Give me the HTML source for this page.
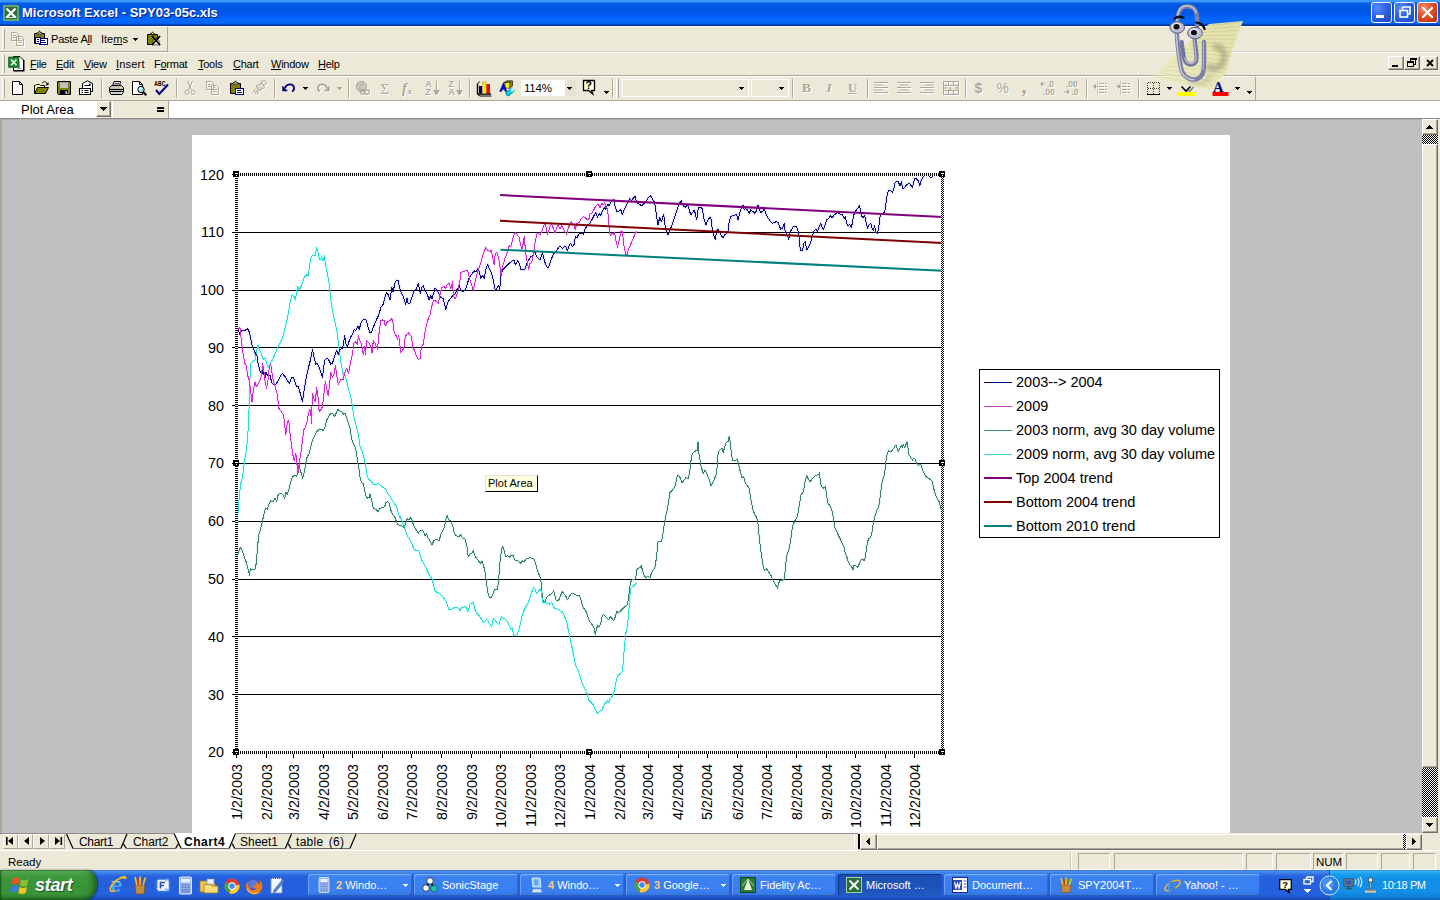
<!DOCTYPE html>
<html><head><meta charset="utf-8"><title>Microsoft Excel - SPY03-05c.xls</title>
<style>
html,body{margin:0;padding:0;background:#ece9d8;}
body{width:1440px;height:900px;overflow:hidden;font-family:"Liberation Sans",sans-serif;font-size:11px;color:#000;}
#root{position:relative;width:1440px;height:900px;overflow:hidden;background:#ece9d8;}
.abs{position:absolute;}
.t{position:absolute;white-space:nowrap;line-height:1;}
u{text-decoration:underline;}
#title{left:0;top:0;width:1440px;height:26px;background:linear-gradient(to bottom,#3d9bff 0px,#3a96fd 1.5px,#1c74ee 2.5px,#0a5ee3 3.5px,#0057e2 5px,#0056e5 12px,#005af0 14.5px,#0060f8 16.5px,#0468fc 19px,#0568fb 23px,#0556dc 24px,#0038a8 25px,#00309a 26px);}
#title .cap{left:22px;top:6px;font-weight:bold;font-size:13px;color:#fff;text-shadow:1px 1px 0 #0a1883;}
.tb{position:absolute;width:21px;height:21px;top:2px;border-radius:3px;box-sizing:border-box;border:1px solid #fff;background:radial-gradient(circle at 30% 25%,#5a8bf5 0%,#2f62e3 45%,#1a47c8 100%);}
.tb.x{background:radial-gradient(circle at 30% 25%,#f0926f 0%,#dd4f28 45%,#b8300f 100%);}
.sep{position:absolute;width:2px;border-left:1px solid #aca899;border-right:1px solid #fff;box-sizing:border-box;}
.grip{position:absolute;width:3px;border-left:1px solid #fff;border-right:1px solid #aca899;box-sizing:border-box;}
.hl{position:absolute;height:2px;border-top:1px solid #aca899;border-bottom:1px solid #fff;box-sizing:border-box;}
.btn3d{position:absolute;box-sizing:border-box;background:#ece9d8;border:1px solid;border-color:#fff #716f64 #716f64 #fff;box-shadow:inset -1px -1px 0 #aca899;}
.sunk{position:absolute;box-sizing:border-box;border:1px solid;border-color:#aca899 #fff #fff #aca899;}
.dither{position:absolute;background-color:#fff;background-image:linear-gradient(45deg,#000 25%,transparent 25%,transparent 75%,#000 75%),linear-gradient(45deg,#000 25%,transparent 25%,transparent 75%,#000 75%);background-size:2px 2px;background-position:0 0,1px 1px;}
.task{position:absolute;top:874px;height:22px;width:104px;border-radius:3px;box-sizing:border-box;background:linear-gradient(to bottom,#5a94f5 0%,#3c81f0 12%,#3a7ff0 80%,#3372e0 100%);box-shadow:inset 1px 1px 0 rgba(255,255,255,.25), inset -1px -1px 0 rgba(0,0,0,.18);color:#fff;font-size:11px;}
.task.act{background:linear-gradient(to bottom,#1b50b8 0%,#1e52b7 50%,#2159c4 100%);box-shadow:inset 1px 1px 1px rgba(0,0,0,.35);}
.task .lbl{position:absolute;left:28px;top:5px;white-space:nowrap;font-size:11px;}

</style></head>
<body>
<div id="root">
<div id="title" class="abs">
<svg class="abs" style="left:3px;top:5px" width="16" height="16" viewBox="0 0 16 16" ><rect x="0" y="0" width="16" height="16" fill="#3a7d44"/><rect x="1" y="1" width="14" height="14" fill="#2e6b3a" stroke="#9fd0a0" stroke-width="1"/>
<path d="M3.5,3.5 L12.5,12.5 M12.5,3.5 L3.5,12.5" stroke="#fff" stroke-width="2.2"/>
<path d="M2.5,12.5 H13.5" stroke="#cfe8cf" stroke-width="1"/></svg>
<div class="t cap">Microsoft Excel - SPY03-05c.xls</div>
<div class="tb" style="left:1371px"><svg class="abs" style="left:4px;top:12px" width="8" height="3" viewBox="0 0 8 3" ><rect width="8" height="3" fill="#fff"/></svg></div>
<div class="tb" style="left:1394px"><svg class="abs" style="left:4px;top:3px" width="12" height="12" viewBox="0 0 12 12" ><path d="M3.5,1 H11 V8 H9 M3.5,1 V3.5" stroke="#fff" stroke-width="1.6" fill="none"/><rect x="1" y="4.5" width="7.5" height="6.5" fill="none" stroke="#fff" stroke-width="1.6"/></svg></div>
<div class="tb x" style="left:1417px"><svg class="abs" style="left:4px;top:4px" width="11" height="11" viewBox="0 0 11 11" ><path d="M1,1 L10,10 M10,1 L1,10" stroke="#fff" stroke-width="2.2" stroke-linecap="round"/></svg></div>
</div>
<div class="abs" style="left:0;top:51px;width:1440px;height:1px;background:#d2cfbf"></div>
<div class="abs" style="left:0;top:52px;width:1440px;height:1px;background:#fff"></div>
<div class="abs" style="left:0;top:51px;width:168px;height:1px;background:#aca899"></div>
<div class="abs" style="left:167px;top:27px;width:1px;height:25px;background:#aca899"></div>
<div class="abs" style="left:0;top:75px;width:1440px;height:1px;background:#aca899"></div>
<div class="abs" style="left:0;top:76px;width:1440px;height:1px;background:#fff"></div>
<div class="abs" style="left:0;top:100px;width:1440px;height:1px;background:#aca899"></div>
<div class="abs" style="left:1255px;top:77px;width:1px;height:23px;background:#aca899"></div>
<div class="abs" style="left:0;top:26px;width:1440px;height:1px;background:#fbfaf4"></div>
<div class="grip" style="left:2px;top:29px;height:20px"></div>
<div class="grip" style="left:2px;top:55px;height:18px"></div>
<div class="grip" style="left:2px;top:79px;height:19px"></div>
<div class="grip" style="left:616px;top:79px;height:19px"></div>
<svg class="abs" style="left:10px;top:31px" width="16" height="16" viewBox="0 0 16 16" ><g transform="translate(1,1)" style="--c:#fff" stroke="#fff" fill="#fff"><path d="M1.5,1.5 H6.5 L8.5,3.5 V9.5 H1.5 Z M6.5,5.5 H11.5 L13.5,7.5 V14.5 H6.5 Z" fill="none"/><path d="M3,4.5 H6 M3,6.5 H6 M8,9.5 H12 M8,11.5 H12 M8,7.5 H10" fill="none"/></g><g stroke="#aca899" fill="#aca899"><path d="M1.5,1.5 H6.5 L8.5,3.5 V9.5 H1.5 Z M6.5,5.5 H11.5 L13.5,7.5 V14.5 H6.5 Z" fill="none"/><path d="M3,4.5 H6 M3,6.5 H6 M8,9.5 H12 M8,11.5 H12 M8,7.5 H10" fill="none"/></g></svg>
<svg class="abs" style="left:33px;top:30px" width="16" height="16" viewBox="0 0 16 16" ><path d="M1.5,3.5 H11.5 V13.5 H1.5 Z" fill="#808000" stroke="#000"/>
<path d="M4.5,3.5 V2.5 H5.5 L6.5,0.8 L7.5,2.5 H8.5 V3.5 Z" fill="#ffff66" stroke="#000" stroke-width=".8"/>
<rect x="4" y="3" width="5" height="1.6" fill="#c0c0c0" stroke="#000" stroke-width=".5"/>
<rect x="6.5" y="8.5" width="8" height="6" fill="#fff" stroke="#000080"/>
<path d="M8,10.5 H12 M8,12.5 H13" stroke="#000080"/><rect x="2.5" y="7.5" width="5" height="6" fill="#fff" stroke="#000080"/><path d="M4,9.5 H6 M4,11.5 H6" stroke="#000080"/></svg>
<div class="t" style="left:51px;top:34px;font-size:11px;letter-spacing:-0.2px">Paste A<u>l</u>l</div>
<div class="t" style="left:101px;top:34px;font-size:11px">Ite<u>m</u>s</div>
<svg class="abs" style="left:133px;top:38px" width="5" height="3" viewBox="0 0 5 3" shape-rendering="crispEdges"><path d="M0,0 H5 L2.5,3 Z" fill="#000"/></svg>
<svg class="abs" style="left:146px;top:31px" width="16" height="16" viewBox="0 0 16 16" ><path d="M1.5,3.5 H11.5 V13.5 H1.5 Z" fill="#808000" stroke="#000"/>
<path d="M4.5,3.5 V2.5 H5.5 L6.5,0.8 L7.5,2.5 H8.5 V3.5 Z" fill="#ffff66" stroke="#000" stroke-width=".8"/>
<path d="M6,5 L14,14 M14,5 L6,14" stroke="#000" stroke-width="1.6"/><path d="M7,9 h6 v5 h-6z" fill="#fff" stroke="#000" stroke-width=".6" opacity=".85"/><path d="M6,5 L14,14 M14,5 L6,14" stroke="#000" stroke-width="1.3"/></svg>
<svg class="abs" style="left:8px;top:54px" width="17" height="18" viewBox="0 0 17 18" ><path d="M5.5,2.5 H12 L15.5,6 V16.5 H5.5 Z" fill="#fff" stroke="#000" stroke-width="1"/><path d="M5.5,16.8 H15.8 V6" stroke="#000" stroke-width="1.4" fill="none"/>
<rect x="0.8" y="3.2" width="10" height="10" fill="#1f8a32" stroke="#0b5a1a"/><path d="M3,5.5 L8.5,11.2 M8.5,5.5 L3,11.2" stroke="#e8ffe8" stroke-width="1.5"/>
<path d="M11.5,8 V14 M9,14.5 H14" stroke="#6a8ad0" stroke-width="1" opacity=".7"/></svg>
<div class="t" style="left:30px;top:59px;font-size:11px;letter-spacing:-0.25px"><u>F</u>ile</div>
<div class="t" style="left:56px;top:59px;font-size:11px;letter-spacing:-0.25px"><u>E</u>dit</div>
<div class="t" style="left:84px;top:59px;font-size:11px;letter-spacing:-0.25px"><u>V</u>iew</div>
<div class="t" style="left:116px;top:59px;font-size:11px;letter-spacing:-0.25px"><span style="letter-spacing:0.2px"><u>I</u>nsert</span></div>
<div class="t" style="left:154px;top:59px;font-size:11px;letter-spacing:-0.25px">F<u>o</u>rmat</div>
<div class="t" style="left:198px;top:59px;font-size:11px;letter-spacing:-0.25px"><u>T</u>ools</div>
<div class="t" style="left:233px;top:59px;font-size:11px;letter-spacing:-0.25px"><u>C</u>hart</div>
<div class="t" style="left:271px;top:59px;font-size:11px;letter-spacing:-0.25px"><u>W</u>indow</div>
<div class="t" style="left:318px;top:59px;font-size:11px;letter-spacing:-0.25px"><u>H</u>elp</div>
<div class="btn3d" style="left:1388px;top:56px;width:16px;height:14px"><svg class="abs" style="left:3px;top:8px" width="6" height="2" viewBox="0 0 6 2" ><rect width="6" height="2" fill="#000"/></svg></div>
<div class="btn3d" style="left:1404px;top:56px;width:16px;height:14px"><svg class="abs" style="left:2px;top:1px" width="10" height="10" viewBox="0 0 10 10" ><path d="M3,0.5 H9 V1.5 H3 Z M3,0.5 V3 M8.5,1 V6 H7" stroke="#000" stroke-width="1" fill="none" shape-rendering="crispEdges"/><path d="M0.5,3.5 H6.5 V4.5 H0.5 Z M0.5,4 V8.5 H6.5 V4" fill="none" stroke="#000" stroke-width="1" shape-rendering="crispEdges"/></svg></div>
<div class="btn3d" style="left:1422px;top:56px;width:16px;height:14px"><svg class="abs" style="left:3px;top:2px" width="8" height="8" viewBox="0 0 8 8" ><path d="M1,1 L7,7 M7,1 L1,7" stroke="#000" stroke-width="1.8"/></svg></div>
<svg class="abs" style="left:10px;top:80px" width="17" height="17" viewBox="0 0 17 17" ><path d="M2.5,1.5 H9.5 L12.5,4.5 V14.5 H2.5 Z" fill="#fff" stroke="#000"/><path d="M9.5,1.5 V4.5 H12.5" fill="none" stroke="#000"/></svg>
<svg class="abs" style="left:33px;top:80px" width="17" height="17" viewBox="0 0 17 17" ><path d="M1.5,13.5 V5.5 H2.5 L3.5,4.5 H6.5 L7.5,5.5 H11.5 V7.5" fill="#ffff99" stroke="#000"/>
<path d="M1.5,13.5 L4.5,7.5 H15.5 L12.5,13.5 Z" fill="#808000" stroke="#000"/>
<path d="M9,3.5 C10.5,1.2 13,1.2 14.2,3.6" fill="none" stroke="#000"/><path d="M15.5,2 V5.3 H12.3 Z" fill="#000"/></svg>
<svg class="abs" style="left:56px;top:80px" width="17" height="17" viewBox="0 0 17 17" ><path d="M1.5,1.5 H14.5 V14.5 H2.5 L1.5,13.5 Z" fill="#808000" stroke="#000"/>
<rect x="4" y="2" width="8" height="6" fill="#c0c0c0"/><rect x="4" y="2" width="8" height="1.6" fill="#a9a9a9"/>
<rect x="4" y="10" width="8" height="4.5" fill="#000"/><rect x="9.5" y="11" width="1.8" height="3" fill="#c0c0c0"/></svg>
<svg class="abs" style="left:79px;top:80px" width="17" height="17" viewBox="0 0 17 17" ><path d="M3.5,8 V3.5 L8.5,0.8 L13.5,3.5 V11.5 H10" fill="#fff" stroke="#000"/>
<path d="M5.5,5.5 H11.5" stroke="#000"/><rect x="10" y="3.6" width="1.6" height="1.6" fill="#000080"/>
<rect x="0.5" y="8.5" width="11" height="6" fill="#fff" stroke="#000"/><path d="M2.5,10.5 H4 M5.5,10.5 H9.5 M2.5,12.5 H4 M5.5,12.5 H9.5" stroke="#000"/></svg>
<svg class="abs" style="left:108px;top:80px" width="17" height="17" viewBox="0 0 17 17" ><path d="M4.5,6 L6,1.5 H12.5 L11.5,6" fill="#fff" stroke="#000"/><path d="M6.5,3.5 H11 M6,5 H10.5" stroke="#000" stroke-width=".7"/>
<path d="M1.5,7.5 L3.5,5.5 H13.5 L15.5,7.5 V11.5 H1.5 Z" fill="#c0c0c0" stroke="#000"/>
<path d="M1.5,11.5 H15.5 L14,14.5 H3 Z" fill="#fff" stroke="#000"/><path d="M2,9.5 H15" stroke="#000"/><rect x="12" y="7.2" width="1.6" height="1.2" fill="#ffff00"/>
<path d="M3.5,13 H13" stroke="#808080" stroke-width=".8"/></svg>
<svg class="abs" style="left:131px;top:80px" width="17" height="17" viewBox="0 0 17 17" ><path d="M1.5,1.5 H8.5 L11.5,4.5 V14.5 H1.5 Z" fill="#fff" stroke="#000"/><path d="M8.5,1.5 V4.5 H11.5" fill="none" stroke="#000"/>
<circle cx="10" cy="9.5" r="3.2" fill="#9fe0e8" stroke="#000" stroke-width="1"/><circle cx="9.2" cy="8.7" r="1.2" fill="#e8ffff"/>
<path d="M12.3,12 L15.3,15.2" stroke="#000" stroke-width="2"/></svg>
<svg class="abs" style="left:154px;top:80px" width="17" height="17" viewBox="0 0 17 17" ><text x="0.3" y="6.2" font-family="Liberation Sans" font-weight="bold" font-size="6.6" fill="#000" textLength="11" lengthAdjust="spacingAndGlyphs">ABC</text>
<path d="M2,10 L5.3,14 L14,4.5" fill="none" stroke="#000080" stroke-width="2"/></svg>
<svg class="abs" style="left:183px;top:80px" width="17" height="17" viewBox="0 0 17 17" ><g transform="translate(1,1)" style="--c:#fff" stroke="#fff" fill="#fff"><path d="M4.5,1 L8.5,10 M9.5,1 L5.5,10" fill="none"/><circle cx="4" cy="12.3" r="2" fill="none"/><circle cx="10" cy="12.3" r="2" fill="none"/></g><g stroke="#aca899" fill="#aca899"><path d="M4.5,1 L8.5,10 M9.5,1 L5.5,10" fill="none"/><circle cx="4" cy="12.3" r="2" fill="none"/><circle cx="10" cy="12.3" r="2" fill="none"/></g></svg>
<svg class="abs" style="left:205px;top:80px" width="17" height="17" viewBox="0 0 17 17" ><g transform="translate(1,1)" style="--c:#fff" stroke="#fff" fill="#fff"><path d="M1.5,1.5 H6.5 L8.5,3.5 V9.5 H1.5 Z M6.5,5.5 H11.5 L13.5,7.5 V14.5 H6.5 Z" fill="none"/><path d="M3,4.5 H6 M3,6.5 H6 M8,9.5 H12 M8,11.5 H12 M8,7.5 H10" fill="none"/></g><g stroke="#aca899" fill="#aca899"><path d="M1.5,1.5 H6.5 L8.5,3.5 V9.5 H1.5 Z M6.5,5.5 H11.5 L13.5,7.5 V14.5 H6.5 Z" fill="none"/><path d="M3,4.5 H6 M3,6.5 H6 M8,9.5 H12 M8,11.5 H12 M8,7.5 H10" fill="none"/></g></svg>
<svg class="abs" style="left:229px;top:80px" width="17" height="17" viewBox="0 0 17 17" ><path d="M1.5,3.5 H11.5 V13.5 H1.5 Z" fill="#808000" stroke="#000"/>
<path d="M4.5,3.5 V2.5 H5.5 L6.5,0.8 L7.5,2.5 H8.5 V3.5 Z" fill="#ffff66" stroke="#000" stroke-width=".8"/>
<rect x="4" y="3" width="5" height="1.6" fill="#c0c0c0" stroke="#000" stroke-width=".5"/>
<rect x="6.5" y="8.5" width="8" height="6" fill="#fff" stroke="#000080"/>
<path d="M8,10.5 H12 M8,12.5 H13" stroke="#000080"/></svg>
<svg class="abs" style="left:252px;top:80px" width="17" height="17" viewBox="0 0 17 17" ><g transform="translate(1,1)" style="--c:#fff" stroke="#fff" fill="#fff"><path d="M9,1.5 L12.5,0.5 L14.5,3.5 L11.5,5.5 Z" fill="none"/><path d="M4,6 L10,3.2 L12.6,7.4 L7,11 Z" fill="none"/><path d="M3,9 L1.5,13 M4.5,10 L3.5,14 M6,11 L5.5,15" fill="none"/><path d="M5.5,6.5 L8,10 M7.5,5.5 L10,9" fill="none"/></g><g stroke="#aca899" fill="#aca899"><path d="M9,1.5 L12.5,0.5 L14.5,3.5 L11.5,5.5 Z" fill="none"/><path d="M4,6 L10,3.2 L12.6,7.4 L7,11 Z" fill="none"/><path d="M3,9 L1.5,13 M4.5,10 L3.5,14 M6,11 L5.5,15" fill="none"/><path d="M5.5,6.5 L8,10 M7.5,5.5 L10,9" fill="none"/></g></svg>
<svg class="abs" style="left:281px;top:80px" width="17" height="17" viewBox="0 0 17 17" ><g fill="#000080" stroke="#000080" stroke-width=".5"><path d="M1.5,11 L1.5,6 L6.5,11 Z"/><path d="M4,8 C5.5,3.6 12,3 13,7.4 C13.4,9.2 12.6,10.6 11.2,11.6" fill="none" stroke-width="1.8"/></g></svg>
<svg class="abs" style="left:315px;top:80px" width="17" height="17" viewBox="0 0 17 17" ><g transform="translate(1,1)" style="--c:#fff" stroke="#fff" fill="#fff"><path d="M14.5,11 L14.5,6 L9.5,11 Z" stroke-width=".5"/><path d="M12,8 C10.5,3.6 4,3 3,7.4 C2.6,9.2 3.4,10.6 4.8,11.6" fill="none" stroke-width="1.8"/></g><g stroke="#aca899" fill="#aca899"><path d="M14.5,11 L14.5,6 L9.5,11 Z" stroke-width=".5"/><path d="M12,8 C10.5,3.6 4,3 3,7.4 C2.6,9.2 3.4,10.6 4.8,11.6" fill="none" stroke-width="1.8"/></g></svg>
<svg class="abs" style="left:355px;top:80px" width="17" height="17" viewBox="0 0 17 17" ><g transform="translate(1,1)" stroke="#fff" fill="#fff"><circle cx="6.5" cy="6.5" r="5.2" stroke-width="1" fill="none"/><path d="M2,5 C4,3 5,7 7,5.5 C8,4.5 7,2.5 8.5,2 M3,10 C4,8 6,9.5 6,11" fill="none"/><rect x="5.5" y="10" width="4.6" height="4" rx="1.5" fill="none" stroke-width="1.3"/><rect x="9.6" y="10" width="4.8" height="4" rx="1.5" fill="none" stroke-width="1.3"/></g><g stroke="#aca899" fill="#aca899"><circle cx="6.5" cy="6.5" r="5.2" fill="#aca899" opacity=".55" stroke="none"/><circle cx="6.5" cy="6.5" r="5.2" stroke-width="1" fill="none"/><path d="M2,5 C4,3 5,7 7,5.5 C8,4.5 7,2.5 8.5,2 M3,10 C4,8 6,9.5 6,11" fill="none"/><rect x="5.5" y="10" width="4.6" height="4" rx="1.5" fill="none" stroke-width="1.3"/><rect x="9.6" y="10" width="4.8" height="4" rx="1.5" fill="none" stroke-width="1.3"/></g></svg>
<svg class="abs" style="left:425px;top:80px" width="17" height="17" viewBox="0 0 17 17" ><text x="1.5" y="8" font-family="Liberation Sans" font-size="8.5" font-weight="bold" font-style="normal" fill="#fff" >A</text><text x="0.5" y="7" font-family="Liberation Sans" font-size="8.5" font-weight="bold" font-style="normal" fill="#aca899" >A</text><text x="1.5" y="16" font-family="Liberation Sans" font-size="8.5" font-weight="bold" font-style="normal" fill="#fff" >Z</text><text x="0.5" y="15" font-family="Liberation Sans" font-size="8.5" font-weight="bold" font-style="normal" fill="#aca899" >Z</text><g transform="translate(1,1)" style="--c:#fff" stroke="#fff" fill="#fff"><path d="M11.5,1 V12" fill="none"/><path d="M8.8,10.5 H14.2 L11.5,15 Z"/></g><g stroke="#aca899" fill="#aca899"><path d="M11.5,1 V12" fill="none"/><path d="M8.8,10.5 H14.2 L11.5,15 Z"/></g></svg>
<svg class="abs" style="left:448px;top:80px" width="17" height="17" viewBox="0 0 17 17" ><text x="1.5" y="8" font-family="Liberation Sans" font-size="8.5" font-weight="bold" font-style="normal" fill="#fff" >Z</text><text x="0.5" y="7" font-family="Liberation Sans" font-size="8.5" font-weight="bold" font-style="normal" fill="#aca899" >Z</text><text x="1.5" y="16" font-family="Liberation Sans" font-size="8.5" font-weight="bold" font-style="normal" fill="#fff" >A</text><text x="0.5" y="15" font-family="Liberation Sans" font-size="8.5" font-weight="bold" font-style="normal" fill="#aca899" >A</text><g transform="translate(1,1)" style="--c:#fff" stroke="#fff" fill="#fff"><path d="M11.5,1 V12" fill="none"/><path d="M8.8,10.5 H14.2 L11.5,15 Z"/></g><g stroke="#aca899" fill="#aca899"><path d="M11.5,1 V12" fill="none"/><path d="M8.8,10.5 H14.2 L11.5,15 Z"/></g></svg>
<svg class="abs" style="left:476px;top:80px" width="17" height="17" viewBox="0 0 17 17" ><path d="M1.5,4 V14 H15" fill="none" stroke="#000" stroke-width="1.4"/><path d="M1.5,4 L3.5,1.5" stroke="#000"/>
<rect x="3" y="6" width="3.2" height="7.5" fill="#000080"/><rect x="6.6" y="2" width="3.4" height="11.5" fill="#ffee00" stroke="#a08000" stroke-width=".4"/><rect x="10.4" y="4" width="3.6" height="9.5" fill="#e01010"/>
<path d="M2,14.8 L4,16 H15.5" fill="none" stroke="#000" stroke-width="1"/></svg>
<svg class="abs" style="left:499px;top:80px" width="17" height="17" viewBox="0 0 17 17" ><path d="M5,2.5 L8,0.8 H13.5 V6 L10.5,8 Z" fill="#808000" stroke="#000" stroke-width=".6"/><rect x="6" y="2.5" width="4.8" height="5.6" fill="#ffee00" stroke="#000" stroke-width=".5"/>
<path d="M0.5,11.5 L4.5,2.5 L8,11.5 H6 L5.4,9.5 H3.3 L2.6,11.5 Z" fill="#0000c0" stroke="#000080" stroke-width=".4"/>
<path d="M7,12.5 L12,8.2 A2.4,2.4 0 0 1 15.2,11.2 L10.2,15.6 A2.4,2.4 0 0 1 7,12.5 Z" fill="#00d0e0" stroke="#006080" stroke-width=".6"/><ellipse cx="13.6" cy="9.7" rx="1.8" ry="2.2" fill="#c0f4f8" transform="rotate(40 13.6 9.7)"/></svg>
<svg class="abs" style="left:873px;top:80px" width="17" height="17" viewBox="0 0 17 17" ><g transform="translate(1,1)" style="--c:#fff" stroke="#fff" fill="#fff"><path d="M1,2.5 h14" fill="none" stroke-width="1"/><path d="M1,5.0 h9" fill="none" stroke-width="1"/><path d="M1,7.5 h14" fill="none" stroke-width="1"/><path d="M1,10.0 h9" fill="none" stroke-width="1"/><path d="M1,12.5 h14" fill="none" stroke-width="1"/></g><g stroke="#aca899" fill="#aca899"><path d="M1,2.5 h14" fill="none" stroke-width="1"/><path d="M1,5.0 h9" fill="none" stroke-width="1"/><path d="M1,7.5 h14" fill="none" stroke-width="1"/><path d="M1,10.0 h9" fill="none" stroke-width="1"/><path d="M1,12.5 h14" fill="none" stroke-width="1"/></g></svg>
<svg class="abs" style="left:896px;top:80px" width="17" height="17" viewBox="0 0 17 17" ><g transform="translate(1,1)" style="--c:#fff" stroke="#fff" fill="#fff"><path d="M1,2.5 h14" fill="none" stroke-width="1"/><path d="M3.5,5.0 h9" fill="none" stroke-width="1"/><path d="M1,7.5 h14" fill="none" stroke-width="1"/><path d="M3.5,10.0 h9" fill="none" stroke-width="1"/><path d="M1,12.5 h14" fill="none" stroke-width="1"/></g><g stroke="#aca899" fill="#aca899"><path d="M1,2.5 h14" fill="none" stroke-width="1"/><path d="M3.5,5.0 h9" fill="none" stroke-width="1"/><path d="M1,7.5 h14" fill="none" stroke-width="1"/><path d="M3.5,10.0 h9" fill="none" stroke-width="1"/><path d="M1,12.5 h14" fill="none" stroke-width="1"/></g></svg>
<svg class="abs" style="left:919px;top:80px" width="17" height="17" viewBox="0 0 17 17" ><g transform="translate(1,1)" style="--c:#fff" stroke="#fff" fill="#fff"><path d="M1,2.5 h14" fill="none" stroke-width="1"/><path d="M6,5.0 h9" fill="none" stroke-width="1"/><path d="M1,7.5 h14" fill="none" stroke-width="1"/><path d="M6,10.0 h9" fill="none" stroke-width="1"/><path d="M1,12.5 h14" fill="none" stroke-width="1"/></g><g stroke="#aca899" fill="#aca899"><path d="M1,2.5 h14" fill="none" stroke-width="1"/><path d="M6,5.0 h9" fill="none" stroke-width="1"/><path d="M1,7.5 h14" fill="none" stroke-width="1"/><path d="M6,10.0 h9" fill="none" stroke-width="1"/><path d="M1,12.5 h14" fill="none" stroke-width="1"/></g></svg>
<svg class="abs" style="left:943px;top:80px" width="17" height="17" viewBox="0 0 17 17" ><g transform="translate(1,1)" style="--c:#fff" stroke="#fff" fill="#fff"><rect x="0.5" y="1.5" width="15" height="13" fill="none"/><path d="M0.5,5.5 H15.5 M0.5,10.5 H15.5 M5.5,1.5 V5.5 M10.5,1.5 V5.5 M5.5,10.5 V14.5 M10.5,10.5 V14.5" fill="none"/><path d="M1.5,8 h3 M14.5,8 h-3 M2.8,6.8 L1.5,8 L2.8,9.2 M13.2,6.8 L14.5,8 L13.2,9.2" fill="none" stroke-width=".9"/><text x="5.6" y="10" font-family="Liberation Sans" font-size="5.5" stroke="none">a</text></g><g stroke="#aca899" fill="#aca899"><rect x="0.5" y="1.5" width="15" height="13" fill="none"/><path d="M0.5,5.5 H15.5 M0.5,10.5 H15.5 M5.5,1.5 V5.5 M10.5,1.5 V5.5 M5.5,10.5 V14.5 M10.5,10.5 V14.5" fill="none"/><path d="M1.5,8 h3 M14.5,8 h-3 M2.8,6.8 L1.5,8 L2.8,9.2 M13.2,6.8 L14.5,8 L13.2,9.2" fill="none" stroke-width=".9"/><text x="5.6" y="10" font-family="Liberation Sans" font-size="5.5" stroke="none">a</text></g></svg>
<svg class="abs" style="left:1093px;top:80px" width="17" height="17" viewBox="0 0 17 17" ><g transform="translate(1,1)" style="--c:#fff" stroke="#fff" fill="#fff"><path d="M6,3.5 H14 M6,6.5 H14 M6,9.5 H14 M6,12.5 H14" fill="none" stroke-dasharray="5 1"/><path d="M4.5,1.5 V14.5" fill="none" stroke-dasharray="1 1"/><path d="M1,6.5 H4.5" fill="none"/><path d="M2.5,4.5 L0.5,6.5 L2.5,8.5 Z"/></g><g stroke="#aca899" fill="#aca899"><path d="M6,3.5 H14 M6,6.5 H14 M6,9.5 H14 M6,12.5 H14" fill="none" stroke-dasharray="5 1"/><path d="M4.5,1.5 V14.5" fill="none" stroke-dasharray="1 1"/><path d="M1,6.5 H4.5" fill="none"/><path d="M2.5,4.5 L0.5,6.5 L2.5,8.5 Z"/></g></svg>
<svg class="abs" style="left:1116px;top:80px" width="17" height="17" viewBox="0 0 17 17" ><g transform="translate(1,1)" style="--c:#fff" stroke="#fff" fill="#fff"><path d="M6,3.5 H14 M6,6.5 H14 M6,9.5 H14 M6,12.5 H14" fill="none" stroke-dasharray="5 1"/><path d="M4.5,1.5 V14.5" fill="none" stroke-dasharray="1 1"/><path d="M0.5,6.5 H4" fill="none"/><path d="M2.5,4.5 L4.5,6.5 L2.5,8.5 Z"/></g><g stroke="#aca899" fill="#aca899"><path d="M6,3.5 H14 M6,6.5 H14 M6,9.5 H14 M6,12.5 H14" fill="none" stroke-dasharray="5 1"/><path d="M4.5,1.5 V14.5" fill="none" stroke-dasharray="1 1"/><path d="M0.5,6.5 H4" fill="none"/><path d="M2.5,4.5 L4.5,6.5 L2.5,8.5 Z"/></g></svg>
<svg class="abs" style="left:582px;top:79px" width="17" height="17" viewBox="0 0 17 17" ><path d="M1.5,1.5 H12.5 V11.5 H9.5 L10.8,15 L6.5,11.5 H1.5 Z" fill="#ffffe1" stroke="#000" stroke-width="1.3"/>
<text x="3.6" y="10.2" font-family="Liberation Sans" font-weight="bold" font-size="10.5" fill="#000">?</text></svg>
<svg class="abs" style="left:380px;top:80px" width="17" height="17" viewBox="0 0 17 17" ><text x="1.5" y="14.5" font-family="Liberation Serif" font-size="15" font-weight="normal" font-style="normal" fill="#fff" >Σ</text><text x="0.5" y="13.5" font-family="Liberation Serif" font-size="15" font-weight="normal" font-style="normal" fill="#aca899" >Σ</text></svg>
<svg class="abs" style="left:401px;top:80px" width="17" height="17" viewBox="0 0 17 17" ><text x="2" y="14" font-family="Liberation Serif" font-size="15" font-weight="bold" font-style="italic" fill="#fff" >f</text><text x="1" y="13" font-family="Liberation Serif" font-size="15" font-weight="bold" font-style="italic" fill="#aca899" >f</text><text x="7.5" y="15" font-family="Liberation Serif" font-size="9" font-weight="bold" font-style="italic" fill="#fff" >x</text><text x="6.5" y="14" font-family="Liberation Serif" font-size="9" font-weight="bold" font-style="italic" fill="#aca899" >x</text></svg>
<svg class="abs" style="left:800px;top:80px" width="17" height="17" viewBox="0 0 17 17" ><text x="3" y="13" font-family="Liberation Serif" font-size="13.5" font-weight="bold" font-style="normal" fill="#fff" >B</text><text x="2" y="12" font-family="Liberation Serif" font-size="13.5" font-weight="bold" font-style="normal" fill="#aca899" >B</text></svg>
<svg class="abs" style="left:823px;top:80px" width="17" height="17" viewBox="0 0 17 17" ><text x="4.5" y="13" font-family="Liberation Serif" font-size="13.5" font-weight="bold" font-style="italic" fill="#fff" >I</text><text x="3.5" y="12" font-family="Liberation Serif" font-size="13.5" font-weight="bold" font-style="italic" fill="#aca899" >I</text></svg>
<svg class="abs" style="left:846px;top:80px" width="17" height="17" viewBox="0 0 17 17" ><text x="3" y="12.5" font-family="Liberation Serif" font-size="13" font-weight="bold" font-style="normal" fill="#fff" >U</text><text x="2" y="11.5" font-family="Liberation Serif" font-size="13" font-weight="bold" font-style="normal" fill="#aca899" >U</text><g transform="translate(1,1)" style="--c:#fff" stroke="#fff" fill="#fff"><path d="M2,13.5 H11" fill="none"/></g><g stroke="#aca899" fill="#aca899"><path d="M2,13.5 H11" fill="none"/></g></svg>
<svg class="abs" style="left:973px;top:80px" width="17" height="17" viewBox="0 0 17 17" ><text x="2.5" y="14" font-family="Liberation Sans" font-size="14" font-weight="bold" font-style="normal" fill="#fff" >$</text><text x="1.5" y="13" font-family="Liberation Sans" font-size="14" font-weight="bold" font-style="normal" fill="#aca899" >$</text></svg>
<svg class="abs" style="left:996px;top:80px" width="17" height="17" viewBox="0 0 17 17" ><text x="1.5" y="14" font-family="Liberation Sans" font-size="14" font-weight="normal" font-style="normal" fill="#fff" >%</text><text x="0.5" y="13" font-family="Liberation Sans" font-size="14" font-weight="normal" font-style="normal" fill="#aca899" >%</text></svg>
<svg class="abs" style="left:1020px;top:80px" width="17" height="17" viewBox="0 0 17 17" ><text x="2.5" y="13.5" font-family="Liberation Serif" font-size="20" font-weight="bold" font-style="normal" fill="#fff" >,</text><text x="1.5" y="12.5" font-family="Liberation Serif" font-size="20" font-weight="bold" font-style="normal" fill="#aca899" >,</text></svg>
<svg class="abs" style="left:1040px;top:80px" width="18" height="17" viewBox="0 0 18 17" ><text x="8" y="8" font-family="Liberation Sans" font-size="8.5" font-weight="bold" font-style="normal" fill="#fff" >.0</text><text x="7" y="7" font-family="Liberation Sans" font-size="8.5" font-weight="bold" font-style="normal" fill="#aca899" >.0</text><text x="4" y="16" font-family="Liberation Sans" font-size="8.5" font-weight="bold" font-style="normal" fill="#fff" >.00</text><text x="3" y="15" font-family="Liberation Sans" font-size="8.5" font-weight="bold" font-style="normal" fill="#aca899" >.00</text><g transform="translate(1,1)" style="--c:#fff" stroke="#fff" fill="#fff"><path d="M1,4 H6 M3,2 L1,4 L3,6" fill="none" stroke-width="1.2"/></g><g stroke="#aca899" fill="#aca899"><path d="M1,4 H6 M3,2 L1,4 L3,6" fill="none" stroke-width="1.2"/></g></svg>
<svg class="abs" style="left:1063px;top:80px" width="18" height="17" viewBox="0 0 18 17" ><text x="4" y="8" font-family="Liberation Sans" font-size="8.5" font-weight="bold" font-style="normal" fill="#fff" >.00</text><text x="3" y="7" font-family="Liberation Sans" font-size="8.5" font-weight="bold" font-style="normal" fill="#aca899" >.00</text><text x="9.5" y="16" font-family="Liberation Sans" font-size="8.5" font-weight="bold" font-style="normal" fill="#fff" >.0</text><text x="8.5" y="15" font-family="Liberation Sans" font-size="8.5" font-weight="bold" font-style="normal" fill="#aca899" >.0</text><g transform="translate(1,1)" style="--c:#fff" stroke="#fff" fill="#fff"><path d="M1,12 H6 M4,10 L6,12 L4,14" fill="none" stroke-width="1.2"/></g><g stroke="#aca899" fill="#aca899"><path d="M1,12 H6 M4,10 L6,12 L4,14" fill="none" stroke-width="1.2"/></g></svg>
<svg class="abs" style="left:303px;top:87px" width="5" height="3" viewBox="0 0 5 3" shape-rendering="crispEdges"><path d="M0,0 H5 L2.5,3 Z" fill="#000"/></svg>
<svg class="abs" style="left:337px;top:87px" width="5" height="3" viewBox="0 0 5 3" shape-rendering="crispEdges"><path d="M0,0 H5 L2.5,3 Z" fill="#aca899"/></svg>
<div class="sep" style="left:101px;top:79px;height:19px"></div>
<div class="sep" style="left:176px;top:79px;height:19px"></div>
<div class="sep" style="left:274px;top:79px;height:19px"></div>
<div class="sep" style="left:348px;top:79px;height:19px"></div>
<div class="sep" style="left:469px;top:79px;height:19px"></div>
<div class="sep" style="left:612px;top:79px;height:19px"></div>
<div class="sep" style="left:792px;top:79px;height:19px"></div>
<div class="sep" style="left:867px;top:79px;height:19px"></div>
<div class="sep" style="left:965px;top:79px;height:19px"></div>
<div class="sep" style="left:1086px;top:79px;height:19px"></div>
<div class="sep" style="left:1138px;top:79px;height:19px"></div>
<div class="abs" style="left:521px;top:80px;width:44px;height:16px;background:#fff"></div>
<div class="t" style="left:524px;top:83px;font-size:11.5px;letter-spacing:-0.2px">114%</div>
<div class="abs" style="left:565px;top:80px;width:11px;height:16px;background:#e6e3d2"></div>
<svg class="abs" style="left:567px;top:87px" width="5" height="3" viewBox="0 0 5 3" shape-rendering="crispEdges"><path d="M0,0 H5 L2.5,3 Z" fill="#000"/></svg>
<svg class="abs" style="left:604px;top:91px" width="5" height="3" viewBox="0 0 5 3" shape-rendering="crispEdges"><path d="M0,0 H5 L2.5,3 Z" fill="#000"/></svg>
<div class="abs" style="left:622px;top:79px;width:127px;height:18px;box-sizing:border-box;border:1px solid #fff"></div>
<svg class="abs" style="left:739px;top:87px" width="5" height="3" viewBox="0 0 5 3" shape-rendering="crispEdges"><path d="M0,0 H5 L2.5,3 Z" fill="#000"/></svg>
<div class="abs" style="left:751px;top:79px;width:38px;height:18px;box-sizing:border-box;border:1px solid #fff"></div>
<svg class="abs" style="left:779px;top:87px" width="5" height="3" viewBox="0 0 5 3" shape-rendering="crispEdges"><path d="M0,0 H5 L2.5,3 Z" fill="#000"/></svg>
<svg class="abs" style="left:1147px;top:82px" width="13" height="14" viewBox="0 0 13 14" ><path d="M0.5,0.5 H12.5 M0.5,6.5 H12.5 M0.5,0.5 V12.5 M6.5,0.5 V12.5 M12.5,0.5 V12.5" fill="none" stroke="#000" stroke-dasharray="1 1" opacity=".75" shape-rendering="crispEdges"/><path d="M0,12.5 H13" stroke="#000" stroke-width="1" shape-rendering="crispEdges"/></svg>
<svg class="abs" style="left:1167px;top:87px" width="5" height="3" viewBox="0 0 5 3" shape-rendering="crispEdges"><path d="M0,0 H5 L2.5,3 Z" fill="#000"/></svg>
<svg class="abs" style="left:1177px;top:81px" width="19" height="17" viewBox="0 0 19 17" ><path d="M4.5,5.5 L9,10 L13.5,5.5" fill="none" stroke="#000" stroke-width="1.6"/><path d="M10,9.5 L13,10 L16.5,6" fill="none" stroke="#707070" stroke-width="1.3"/><rect x="0" y="11" width="19" height="4" fill="#ffff00"/></svg>
<svg class="abs" style="left:1212px;top:81px" width="18" height="17" viewBox="0 0 18 17" ><text x="1" y="10.5" font-family="Liberation Serif" font-weight="bold" font-size="14.5" fill="#000080">A</text><rect x="0.5" y="11" width="16" height="4" fill="#ff0000"/></svg>
<svg class="abs" style="left:1235px;top:87px" width="5" height="3" viewBox="0 0 5 3" shape-rendering="crispEdges"><path d="M0,0 H5 L2.5,3 Z" fill="#000"/></svg>
<svg class="abs" style="left:1247px;top:91px" width="5" height="3" viewBox="0 0 5 3" shape-rendering="crispEdges"><path d="M0,0 H5 L2.5,3 Z" fill="#000"/></svg>
<div class="abs" style="left:0;top:101px;width:1440px;height:17px;background:#ece9d8"></div>
<div class="abs" style="left:0;top:101px;width:96px;height:17px;background:#fff"></div>
<div class="t" style="left:21px;top:103px;font-size:13px">Plot Area</div>
<div class="btn3d" style="left:96px;top:101px;width:15px;height:16px"></div>
<svg class="abs" style="left:100px;top:107px" width="7" height="4" viewBox="0 0 7 4" shape-rendering="crispEdges"><path d="M0,0 H7 L3.5,4 Z" fill="#000"/></svg>
<div class="abs" style="left:112px;top:101px;width:1px;height:17px;background:#fff"></div>
<div class="abs" style="left:157px;top:107px;width:7px;height:2px;background:#000"></div><div class="abs" style="left:157px;top:110px;width:7px;height:2px;background:#000"></div>
<div class="abs" style="left:168px;top:101px;width:1272px;height:17px;background:#fff;border-left:1px solid #aca899;box-sizing:border-box"></div>
<div class="abs" style="left:0;top:118px;width:1440px;height:1px;background:#8c8c8c"></div>
<div class="abs" style="left:0;top:119px;width:1422px;height:714px;background:#c0c0c0"></div><div class="abs" style="left:0;top:119px;width:1422px;height:1px;background:#b0b0b0"></div>
<div class="abs" style="left:0;top:119px;width:2px;height:714px;background:#aca899"></div>
<div class="abs" style="left:192px;top:135px;width:1038px;height:698px;background:#fff"></div>
<div class="abs" style="left:1422px;top:119px;width:16px;height:714px;background:#ece9d8"></div>
<div class="btn3d" style="left:1422px;top:119px;width:16px;height:16px"></div><svg class="abs" style="left:1426px;top:125px" width="7" height="4" viewBox="0 0 7 4" shape-rendering="crispEdges"><path d="M0,4 H7 L3.5,0 Z" fill="#000"/></svg>
<div class="dither" style="left:1422px;top:135px;width:16px;height:9px"></div>
<div class="btn3d" style="left:1422px;top:144px;width:16px;height:624px"></div>
<div class="dither" style="left:1422px;top:768px;width:16px;height:49px"></div>
<div class="btn3d" style="left:1422px;top:817px;width:16px;height:16px"></div><svg class="abs" style="left:1426px;top:823px" width="7" height="4" viewBox="0 0 7 4" shape-rendering="crispEdges"><path d="M0,0 H7 L3.5,4 Z" fill="#000"/></svg>
<div class="abs" style="left:1438px;top:119px;width:2px;height:752px;background:#ece9d8"></div>
<svg class="abs" style="left:0;top:0" width="1440" height="900" viewBox="0 0 1440 900">
<g shape-rendering="crispEdges" stroke="#000" stroke-width="1" fill="none">
<path d="M232,232.5 H943"/>
<path d="M232,290.5 H943"/>
<path d="M232,347.5 H943"/>
<path d="M232,405.5 H943"/>
<path d="M232,463.5 H943"/>
<path d="M232,521.5 H943"/>
<path d="M232,579.5 H943"/>
<path d="M232,636.5 H943"/>
<path d="M232,694.5 H943"/>
<path d="M232,174.5 H237"/>
<path d="M232,752.5 H237"/>
<path d="M236.5,752 V758"/>
<path d="M266.5,752 V758"/>
<path d="M293.5,752 V758"/>
<path d="M323.5,752 V758"/>
<path d="M352.5,752 V758"/>
<path d="M382.5,752 V758"/>
<path d="M411.5,752 V758"/>
<path d="M441.5,752 V758"/>
<path d="M471.5,752 V758"/>
<path d="M500.5,752 V758"/>
<path d="M530.5,752 V758"/>
<path d="M560.5,752 V758"/>
<path d="M590.5,752 V758"/>
<path d="M620.5,752 V758"/>
<path d="M648.5,752 V758"/>
<path d="M678.5,752 V758"/>
<path d="M707.5,752 V758"/>
<path d="M737.5,752 V758"/>
<path d="M766.5,752 V758"/>
<path d="M796.5,752 V758"/>
<path d="M826.5,752 V758"/>
<path d="M855.5,752 V758"/>
<path d="M885.5,752 V758"/>
<path d="M914.5,752 V758"/>
</g>
<g fill="none" stroke-width="3" stroke-linejoin="round" opacity=".13">
<path stroke="#40c090" d="M237.5,555.8 L239.2,550 L240.3,547.5 L242,550 L244.2,556.7 L246.7,563.3 L248.3,570 L249.5,575.3 L250.3,568.7 L252.5,569.7 L255,569.2 L256.3,563.3 L257.5,548.3 L258.7,535 L260.8,528.3 L262.5,520.8 L264.2,513.3 L265.3,508.3 L267.5,509.2 L269.2,503.3 L270.8,500.8 L273.3,501.7 L275,498.3 L276.7,501.7 L278.3,494.2 L280.8,493.3 L283.3,495 L284.7,498.3 L285.8,492.5 L287.5,494.2 L289.2,488.3 L290.8,481.7 L292.5,476.7 L295,475 L296.7,476.7 L298.3,470 L299.2,465.8 L300.8,471.7 L302.5,478.3 L304.2,472.5 L305.8,463.3 L307,457.5 L309.2,453.3 L310.8,446.7 L312.5,440 L315,435 L316.7,431.7 L319.2,429.2 L321.7,429.2 L323,430.8 L325,426.7 L326.7,420 L328.3,417.5 L330,414.2 L332.5,413.3 L334.7,416.7 L336.7,411.7 L338,409.2 L339.2,410.8 L341.7,411.7 L343.7,414.2 L345.3,413.3 L346.7,418.3 L348.3,422.5 L350,427.5 L351.3,436.7 L352.5,442.5 L354.7,445.8 L356.3,451.7 L357.5,460.8 L359.2,470 L360.3,479.2 L362,483.3 L363.3,483.3 L364.7,490 L365.8,495.8 L367.5,498.3 L369.2,497.5 L370,494.2 L371.7,500 L373.3,508.3 L375.8,509.2 L378.3,511.7 L380,508.3 L382.5,507.5 L384.7,506.7 L385.8,502.5 L387.5,501.7 L389.2,503.3 L390.8,510 L392.5,514.2 L395,517.5 L397.5,524.7 L400,525.3 L402.5,526.3 L404.2,527.5 L405.8,522.5 L407.5,518.3 L408.7,520 L410.8,517.5 L412.5,520.8 L413.3,525 L415.8,529.2 L418.3,533.3 L420,530.8 L421.7,530 L423.7,531.7 L425,535.8 L426.3,533.3 L428.3,538.3 L430,540.8 L432,545 L433.7,540.8 L435.3,540 L437.5,539.7 L439.2,540.8 L440.8,534.2 L442.5,530.8 L444.2,527.5 L445.8,520 L447.2,515 L448.7,520 L450.8,520.8 L452.5,525 L454.2,532.5 L455.8,535.3 L458.3,537 L460.8,534.7 L462.5,537.5 L465,539.2 L466.7,545 L468.3,556.7 L470,554.2 L471.7,553.3 L473.3,550.8 L474.7,555.8 L476.7,558.3 L479.2,561.7 L480.8,563.3 L482,560.8 L483.3,565 L484.7,570 L485.8,576.7 L487,586.7 L488.3,594.2 L489.7,597.5 L491.3,598 L493,594.2 L494.7,589.2 L497.5,589.2 L498.7,580 L499.7,565 L500.8,555 L502,548.3 L502.8,546.7 L504.2,550.8 L505.8,556.7 L507.5,555.8 L509.2,557.5 L510.8,555.8 L513,555 L514.7,560 L516.7,560 L518.7,561.7 L520.8,563.3 L522.5,560.8 L524.2,561.7 L526.3,558.3 L528,559.2 L529.7,557.5 L532,558.3 L534.2,559.2 L535.8,564.2 L537.5,570.8 L539.2,575 L540.8,579.2 L541.7,590 L542.5,596.7 L543.3,602.5 L545,602.5 L546.3,598.3 L547,596.7 L548.3,595.8 L550.8,594.2 L552.5,592.5 L553.7,590.8 L554.7,595 L555.8,600 L557.5,600.8 L559.2,599.2 L560.8,595 L562.5,591.7 L564.2,594.2 L566.3,596.7 L567.5,600 L569.2,596.7 L570.8,594.2 L573,593.3 L574.7,594.2 L576.7,595.8 L579.2,595.3 L580.8,599.2 L582,604.2 L583.3,607.5 L585,610 L586.7,612.5 L588.3,618.3 L590,621.7 L592.5,625 L594.2,628.3 L595.3,635 L596.3,630 L597.5,625.8 L599.2,626.7 L600.8,623.3 L602,616.7 L603.3,614.2 L605,615.8 L607,618.3 L608.7,620 L610.3,616.7 L612,618.3 L613.7,620.8 L615.3,616.7 L616.7,611.7 L618.7,612.5 L620.8,610.8 L623,608.3 L625,606.7 L627,605 L628.3,600 L629.7,588.3 L630.8,581.7 L632.5,579.7 L634.2,580 L635.8,578.3 L636.7,570 L638.3,568.3 L640,567.5 L641.3,565.3 L642.5,570.8 L644.2,575.8 L645.8,577.5 L648,576.7 L650,577.5 L650.8,575 L652.5,570.8 L654.7,568.3 L655.8,562.5 L657,551.7 L658,541.7 L661.7,541.3 L663,533.3 L664.2,525 L665.3,518.3 L666.7,512.5 L668,505 L669.2,498.3 L670,492.5 L672.5,490 L674.7,486.7 L675.8,483.3 L676.7,477.5 L678,475 L680,477.5 L682,483 L684.2,480 L685.8,477.5 L688.3,478.7 L689.7,471.7 L690.8,461.7 L692,455 L693.3,452.5 L695.8,450.8 L697.5,450 L698,441.7 L698.7,451.7 L700,460 L701.3,467.5 L703.3,473.3 L705,470 L706.7,473.3 L708.7,478.3 L710,481.7 L710,484.2 L711.3,485.8 L713.3,481.7 L715,477.5 L716.7,473.3 L717.5,460 L718.3,451.7 L720,450 L722,448.3 L723.3,452.5 L724.7,446.7 L726.3,442.5 L728,441.7 L729.2,436.7 L730.3,442.5 L731.3,452.5 L732.5,460 L735,460.8 L737.5,459.2 L738.7,465 L740.3,471.7 L742,477.5 L743.7,476.7 L745.3,483.3 L747.5,485.8 L749.2,488.3 L750.3,495.8 L751.7,503.3 L753,510 L754.7,514.2 L756.7,517.5 L758,524.2 L758,524.2 L759.2,536.7 L760.3,546.7 L761.7,556.7 L763.3,566.7 L764.7,570.8 L766.3,568.3 L768.3,571.7 L770.8,575 L772.5,579.2 L774.2,582.5 L775.8,585 L777.5,588.3 L778.7,583.3 L780,580 L782,580.3 L784.2,579.2 L785.3,570 L786.3,558.3 L787.5,553.3 L789.2,548.3 L790.8,540 L791.7,531.7 L793,525 L794.7,520.8 L796.7,518.3 L798.3,511.7 L799.7,503.3 L800.8,495 L803,492.5 L804.2,486.7 L805.3,480 L806.7,475.8 L808.3,479.2 L810,481.7 L812,479.2 L814.2,476.7 L816.7,475 L818.7,474.2 L819.7,472.5 L820.3,482.5 L821.7,486.7 L823.3,488.3 L825.3,486.7 L826.3,493.3 L827.5,501.7 L829.2,505 L830.8,507.5 L832.5,512.5 L833.7,520 L835,528.3 L836.7,531.7 L838.3,535 L840.3,539.2 L842,543.3 L844.2,547.5 L845.3,553.3 L847,557.5 L848.3,561.7 L850,565 L852,567.5 L853,570 L853.7,565.8 L855.3,565 L857.5,567.5 L859.2,564.2 L860.8,560 L862.5,559.2 L864.2,560.8 L865.3,556.7 L866.7,546.7 L868.3,539.2 L870.8,537.5 L872,531.7 L873.3,523.3 L874.7,516.7 L876.7,510.8 L878.7,506.7 L880,498.3 L881.3,488.3 L882.5,480 L884.2,475.8 L885.3,468.3 L886.3,458.3 L887.5,453.3 L888.7,450.8 L890.8,451.7 L893,449.2 L894.7,446.7 L895.8,445 L897,448.3 L898.3,451.7 L900,448.3 L901.3,445.8 L902.5,447.5 L903.3,444.2 L904.7,447.5 L905.8,445 L907,441.7 L908,448.3 L908.7,454.2 L910.8,457.5 L912.5,460 L913.7,458.3 L915,459.2 L916.7,463.3 L918.3,465.8 L919.7,464.2 L921.3,465 L922.5,470 L924.2,473.3 L925.8,476.7 L927.5,477.5 L929.7,479.2 L932,480.8 L933.3,486.7 L935,493.3 L936.7,497.5 L939.2,501.7 L940.8,508.3 L942,511.7"/>
<path stroke="#00ffff" d="M237.5,530.8 L237.7,516.7 L237.8,503.3 L238,513.3 L238.7,503.3 L240,490 L240.8,483.3 L242.5,476.7 L244.2,463.3 L245.8,453.3 L247.5,440 L248.7,420 L249.2,403.3 L249.7,386.7 L250.2,373.3 L250.3,368.3 L251,363.3 L252.5,361.7 L255,360 L256.7,350 L258,345 L259.7,350 L261.7,355 L263.3,359.2 L265,358.3 L266.7,363.3 L268.3,367.5 L270.8,362.5 L273.3,358.3 L276.7,350 L280,343.3 L282.5,338.3 L285,328.3 L287.5,317.5 L290,303.3 L292,295 L294.2,296.7 L295.3,300 L297.5,286.7 L299.7,289.2 L301.7,285 L304.2,277.5 L305.8,275.8 L307,274.2 L308.3,275.8 L310,263.3 L311.2,256.7 L313.3,255 L315,255.8 L316.7,247.5 L318.3,253.3 L319.7,260 L321.7,256.7 L323,260.8 L324.2,255.8 L325.3,263.3 L326.7,270 L328.3,278.3 L329.7,288.3 L330.8,300 L332,308.3 L333.7,316.7 L335.3,323.3 L336.7,330 L338,340 L339.2,350 L340.8,361.7 L342,368.3 L343.3,375 L345,375 L346.7,381.7 L348.3,388.3 L350.3,395 L351.7,400.8 L352.5,408.3 L354.2,418.3 L356.3,425.8 L358,433.3 L359.2,440 L360.3,447.5 L362.5,451.7 L364.2,458.3 L365.8,466.7 L367,475 L368.3,479.2 L370.8,480.8 L373.3,484.2 L375.8,485 L378.3,483.3 L380.8,485.8 L383.3,487.5 L385.8,489.2 L387.5,493.3 L390,495.8 L391.7,499.2 L394.2,503.3 L396.7,506.7 L398.3,513.3 L400,518.3 L400.3,516.7 L402.5,522.5 L404.7,527.5 L405.8,531.7 L407.5,535.8 L410,540 L412,544.2 L414.2,549.2 L416.7,550.8 L418.7,550 L419.7,554.2 L421.7,560 L424.2,564.2 L426.7,570 L429.2,575 L431.7,578.3 L433,582.5 L434.2,588.3 L435.3,591.7 L438.3,592.5 L440.8,595 L443.3,597.5 L445.8,600.8 L447.5,605 L448.7,609.2 L451.7,609.2 L454.2,607.5 L456.7,607.5 L459.2,608.3 L460,611.3 L462,607.5 L465,606.7 L466.7,608.3 L467.5,612 L469.2,607.5 L470,604.2 L471.7,603.3 L473,602.5 L474.2,605.8 L475.3,610.8 L477.5,614.2 L480,616.7 L482,620 L483.3,622.5 L485.3,620.8 L486.7,619.2 L488.3,621.7 L490,624.2 L491.7,626.7 L493.3,618.3 L495,620 L496.7,622.5 L498.7,625 L500,620.8 L501.7,616.7 L503.3,618.3 L505.3,619.2 L507.5,621.7 L509.2,625 L510.8,629.2 L512.5,628.3 L513.7,635.8 L515.8,635 L517.5,634.2 L519.2,628.3 L520.8,621.7 L522.5,614.2 L524.2,610 L525.8,606.7 L527.5,604.2 L529.2,599.2 L530.8,595 L532.5,590 L533.7,587.5 L535,589.2 L536.7,593.3 L538.3,591.7 L540,589.2 L541.3,590.8 L542,598.3 L543,603.3 L544.7,601.7 L546.7,603.3 L549.2,604.2 L551.7,602.5 L553.3,606.7 L555,608.3 L557.5,609.2 L560,610.8 L561.7,612.5 L562.5,611.7 L564.2,615.8 L565.8,619.2 L567,623.3 L568.3,630 L569.7,636.7 L570,638.3 L572,647.5 L573.7,655.8 L575.3,664.2 L577.5,669.2 L579.7,674.2 L581.3,681.7 L583.3,685.8 L585.8,690 L587.5,695 L588.7,700 L590.8,702.5 L593.3,705 L595,709.2 L597,713.3 L598.3,712.5 L600,710.8 L602,710 L603.3,706.7 L605,703.3 L606.3,702.5 L607.5,700.8 L608.7,702.5 L610,699.2 L612.5,695.8 L614.2,691.7 L615.8,683.3 L617.5,675.8 L620,673.7 L622,672 L623,665 L623.7,655 L624.7,645 L625.3,636.7 L625.3,635 L626.7,630 L628,620 L629.2,606.7 L630,595 L630.8,588.3 L632.5,586.7 L635,584.7 L636.3,583"/>
<path stroke="#4040ff" d="M237,334.2 L238.3,330 L240,335.3 L241.7,330.3 L245,330.3 L248,328.7 L249.7,333.3 L252,345 L255,352.5 L257,356.3 L258.3,365 L260.3,371.7 L262,373.7 L263,368.3 L264.2,376.7 L265,378.3 L266,371.7 L267.5,375.8 L270,375 L271.7,382.5 L274.2,385 L275.8,384.2 L278.3,380.8 L280,376.7 L282.5,373.3 L284.2,375.8 L285.8,377.5 L287.5,380.8 L289.7,383.3 L291.3,378.3 L293,377 L295,381.7 L296.7,386.7 L298.3,386.7 L300,392.5 L302.5,401.7 L304.2,390 L305.8,380 L308.3,368.3 L310.8,358.3 L312.5,349.2 L314.2,358.3 L315.8,364.2 L317.5,363.3 L320,370 L322.5,377.5 L324.2,363.3 L325.3,359.2 L327.5,358.3 L329.2,360.8 L330.8,364.2 L332.5,363.3 L334.2,357.5 L336.7,350 L338.3,354.2 L340,349.2 L342.5,348.7 L344.7,335.8 L345.8,343.3 L347.5,346.7 L349.2,340.8 L350.8,336.7 L352.5,334.2 L354.2,329.2 L355.8,330.8 L358,325.8 L359.2,330 L360.8,323.3 L363.3,319.2 L365.8,319.2 L367.5,325 L370,333.3 L371.7,331.7 L374.2,325 L376.7,319.2 L378.8,315 L380.8,307.5 L383.3,304.2 L385,296.7 L386.7,292.5 L388.3,295 L390,300 L391.7,287.5 L393,291.7 L395,283.3 L396.7,280 L398.3,280.8 L399.7,288.3 L401.7,293.3 L403.3,296.7 L405.8,304.2 L407,298.3 L408,303.3 L410,303.3 L412.5,295.8 L414.2,290.8 L415.8,290 L418.3,283.3 L420.3,293.3 L421.7,287.5 L423.3,285.8 L425.3,290.8 L427.5,295 L429.2,300 L430.8,295 L432,299.2 L433.3,294.2 L435,288.3 L437.5,290.8 L439.2,294.2 L440.8,297.5 L443.3,298.3 L445.8,310 L447.5,302.5 L450,299.2 L452.5,295.8 L455,294.2 L456.7,290 L459.2,285.8 L460.8,290 L462.5,291.7 L465.8,289.2 L467.5,283.3 L469.2,277.5 L470,276.7 L471.7,274.2 L474.2,270.8 L475.8,271.7 L478,268.3 L479.7,273.3 L480.8,278.3 L482.5,275.8 L484.2,278.3 L485.8,270 L487.5,264.2 L489.2,268.3 L490.8,271.7 L492.5,276.7 L494.2,285 L495,289.2 L496.7,289.2 L498.3,285 L499.7,289.2 L500.8,276.7 L502.5,270 L505,267.5 L507.5,265 L510,262.5 L512.5,260.8 L514.2,260 L515.3,265 L517.5,260.8 L519.2,263.3 L520.8,269.2 L522.5,270 L525,269.2 L526.7,263.3 L528.3,260.8 L530.8,256.7 L533,255 L534.7,251.7 L536.3,255.8 L538.3,258.3 L540,260 L542.5,252.5 L544.2,260 L545.8,265 L548,268.3 L549.7,264.2 L551.7,258.3 L553.3,254.2 L555.8,251.7 L557.5,249.2 L559.2,246.7 L560.8,246.7 L562.5,248.3 L564.2,246.7 L565.8,246.7 L567.5,250.8 L569.2,245 L570.8,243.3 L572.5,246.7 L574.2,244.2 L575.3,236.7 L577,237.5 L578.7,234.2 L580.8,233 L583.3,234.2 L585,229.2 L587.5,225 L590,223.3 L591.7,220 L594.2,215 L595.8,212.5 L597.5,217.5 L599.2,213.3 L600.8,215.8 L602.5,210.8 L604.2,207.5 L605.8,209.2 L607.5,204.2 L609.2,205.8 L610.8,202.5 L612.5,200.8 L613.7,199.2 L615,205.8 L616.7,211.7 L619.2,210.8 L620.8,209.7 L622.5,215 L624.2,209.2 L626.3,205.8 L628,201.7 L629.7,198.3 L631.3,200.8 L633.3,198.3 L635,196.3 L636.7,202.5 L639.2,204.2 L641.7,205.8 L644.2,203.3 L646.7,200.8 L648.3,197.5 L650.8,195.8 L652.5,199.2 L654.2,201.7 L655.3,205.8 L656.7,217.5 L658,225 L659.7,217.5 L661.3,221.7 L662.5,218.3 L663.7,214.2 L665,225 L666.7,232.5 L668.3,235 L669.7,230.8 L671.7,225.8 L674.2,218.3 L676.7,210.8 L679.2,203.3 L681.3,200.8 L683.3,205.8 L685.3,207.5 L687.5,204.2 L689.2,210 L690.8,215 L692.5,212.5 L694.2,210 L695.3,213.3 L696.7,220 L698.3,207.5 L700.8,207.5 L702.5,209.2 L703.7,217.5 L705.8,225 L707.5,220.8 L709.2,218.3 L710,216.7 L711.3,219.2 L712.5,231.7 L714.2,236.7 L715.3,239.2 L716.7,230.8 L718,229.2 L719.7,232.5 L721.3,235.8 L723,237.5 L724.7,235 L726.7,233.3 L728,230.8 L729.2,221.7 L730.8,216.7 L732.5,215.8 L734.7,215 L736.7,214.7 L738,220 L739.2,215 L740.8,209.2 L743,205 L744.2,209.2 L745.8,208.7 L747.5,210 L749.2,213.3 L750.8,209.7 L753,211.7 L754.7,213.3 L756.7,210.8 L758,205 L759.2,210 L760.8,212.5 L763,210.8 L764.2,207.5 L765.3,212.5 L766.7,215.8 L768.3,218.3 L770,220.8 L772,223.3 L774.2,222.5 L776.3,221.7 L778,222.5 L779.2,225.8 L780.8,229.2 L782.5,228.3 L784.2,223.3 L785,230 L786.3,233.3 L787.5,235.8 L788.7,239.2 L790,232.5 L791.7,229.2 L793.3,226.7 L795.8,226.3 L797,228.3 L798.3,231.7 L799.2,238.3 L800,246.7 L800.8,250.8 L802.5,250 L804.2,242.5 L805.3,241.7 L806.7,250 L808.3,247.5 L810,244.2 L811.7,238.3 L813,234.2 L814.2,230.8 L815.8,229.2 L817.5,231.7 L819.2,226.7 L820.8,223.3 L822.5,228.3 L823.7,229.2 L825,225 L826.7,220 L828.7,218.3 L830.3,215.8 L832,217.5 L834.2,215 L836.3,213.3 L838,212.5 L840,214.2 L842.5,215 L844.2,218.3 L845.3,216.7 L846.7,223.3 L848,225.8 L849.7,224.2 L851.3,227.5 L852.5,222.5 L853.7,215 L855,212.5 L856.7,209.2 L858.3,207.5 L859.5,205.5 L860.5,210 L861.3,215.8 L863,217.5 L864.7,215 L865.8,220.8 L867.5,228.3 L869.2,225 L870.8,223.3 L872,228.3 L873.3,230.8 L874.7,225.8 L875.8,232.5 L877.5,233.3 L878.7,228.3 L879.7,218.3 L880.8,215 L882.5,213.3 L884.7,212.5 L885.8,205 L887,195.8 L888.3,190.8 L890.3,190 L892.5,192.5 L893.7,189.2 L895,183.3 L896.7,181.3 L898.3,181.7 L900,185.8 L901.3,181.7 L903,189.2 L905,186.7 L907,184.7 L909.2,183 L910.8,185.3 L912.5,187.5 L913.7,181.7 L915,178.3 L917,179.2 L918.3,180.8 L919.7,185.8 L920.8,181.7 L922.5,178.3 L924.2,175.3 L926.7,174.5 L928.7,174.5 L930.3,177.5 L932.5,176.7 L934.2,174.5 L942.5,174.5"/>
<path stroke="#ff40ff" d="M237,331.7 L238.3,329.2 L240,327.5 L241.3,340 L243,353.3 L244.7,363.3 L246.3,365 L247.5,375 L249.2,380 L250.8,391.7 L252,401.7 L253.3,390 L255,382.5 L256.3,386.7 L258.3,383.3 L260,380 L261.7,375 L262.5,363.3 L264.2,373.3 L265.3,383.3 L266.7,388.3 L268,380 L269.2,368.3 L270.8,364.2 L272.5,376.7 L274.2,383.3 L275.8,389.2 L277.5,395 L278.7,408.3 L280.8,410.8 L283,414.2 L284.2,420 L285.8,435 L287.5,421.7 L288.7,420 L290,433.3 L291.3,443.3 L292.5,453.3 L294.2,460.8 L295.8,453.3 L296.7,461.7 L298,473.3 L299.2,463.3 L300.8,453.3 L302.5,440 L303.7,430 L305.3,427.5 L307,421.7 L308.3,415 L309.7,409.2 L310.8,411.7 L311.3,423.3 L312.5,393.3 L314.2,400 L315.3,401.7 L316.7,387.5 L318,396.7 L319.2,411.7 L320.8,410 L322.5,406.7 L324.2,391.7 L325.3,381.7 L326.7,388.3 L328.3,395.8 L330,380 L330.8,372.5 L332.5,377.5 L334.2,373.3 L335.3,365.8 L336.7,375 L338.3,384.2 L340.8,379.2 L343.3,379.2 L345,371.7 L346.7,368.3 L348.7,373.3 L350.3,363.3 L352.5,354.2 L353.7,343.3 L355.8,341.7 L357.5,344.2 L358.3,335.8 L359.7,340 L361.7,345 L363.3,355 L364.7,346.7 L365.3,355 L366.7,340.8 L369.2,343.3 L370.8,346.7 L372,353.3 L373.3,340.8 L375,343.3 L377.5,349.2 L379.2,331.7 L380.8,320.8 L382.5,320 L384.2,320.8 L385.3,325.8 L387.5,321.7 L390,320.8 L391.7,318.3 L393,323.3 L394.2,332.5 L396.7,336.7 L397.5,339.2 L398.7,335.8 L400.8,352.5 L402.5,350.8 L404.2,346.7 L405.3,336.7 L406.7,334.2 L408.3,332.5 L410,335 L411.7,336.7 L412.5,346.7 L414.2,350 L416.7,356.7 L418.3,359.2 L420.3,358.3 L421.3,346.7 L423.3,344.2 L425,331.7 L427.5,320.8 L430,315 L432.5,303.3 L434.2,300 L436.7,301.7 L438.3,303.3 L440,295 L441.7,287.5 L444.2,286.7 L445.8,288.3 L447.5,284.2 L449.2,283.3 L450.8,288.3 L452.5,281.7 L453.3,295 L455,299.2 L456.7,295.8 L458.3,288.3 L460,280 L460.8,272.5 L463.3,271.7 L466.7,270 L468.3,272.5 L469.7,280 L470,280 L471.7,285 L473.3,290.8 L475,281.7 L477.5,271.7 L480,265 L482.5,256.7 L484.2,251.7 L485.8,247.5 L487.5,250 L489.7,251.7 L491.3,250 L492.5,256.7 L494.2,265 L495.3,253.3 L496.7,252.5 L498.3,256.7 L499.7,263.3 L500.8,275.8 L502.5,266.7 L505,258.3 L507.5,251.7 L509.2,245.8 L510.8,246.7 L512.5,240 L514.2,234.2 L515.8,232.5 L517.5,235 L519.2,237.5 L520.5,244.2 L522,249.2 L523.3,243.3 L524.2,236.7 L525.8,254.2 L527.5,263.3 L528.7,269.2 L530,263.3 L531.7,262.5 L533.3,255 L535,243.3 L536.7,234.2 L538.3,233.3 L540,235 L541.7,231.7 L543.3,227.5 L544.7,223.3 L545.8,225.8 L547.5,235 L548.7,230.8 L550,225.8 L551.7,224.2 L553.3,228.3 L555,233.3 L556.7,227.5 L558.3,225 L560,229.2 L561.7,225.8 L563.3,228.3 L565,231.7 L566.7,234.2 L568.3,228.3 L570,224.2 L571.3,221.7 L573,225 L574.2,224.2 L575.3,230 L576.7,223.3 L579.2,222.5 L580.8,219.2 L583.3,216.7 L585,217.5 L586.7,219.2 L588.7,220 L590,214.2 L591.7,213.3 L593.3,210.8 L595,207.5 L596.7,205 L598.3,204.2 L600,207.5 L601.7,203.3 L603.3,205 L604.7,202.5 L605.8,207.5 L607.5,208.3 L608.3,216.7 L609.2,227.5 L610.3,235.8 L611.7,233.3 L613.3,234.2 L614.7,232.5 L615.8,240 L617.5,247.5 L619.2,240 L620.8,231.7 L622,230.8 L623,236.7 L624.2,247.5 L625.8,254.2 L627,255.8 L628.3,250 L630,245.8 L632.5,240 L635,234.2 L636.7,231.3"/>
</g>
<g fill="none" stroke-width="1" shape-rendering="crispEdges" stroke-linejoin="round">
<path stroke="#3a8262" d="M237.5,555.8 L239.2,550 L240.3,547.5 L242,550 L244.2,556.7 L246.7,563.3 L248.3,570 L249.5,575.3 L250.3,568.7 L252.5,569.7 L255,569.2 L256.3,563.3 L257.5,548.3 L258.7,535 L260.8,528.3 L262.5,520.8 L264.2,513.3 L265.3,508.3 L267.5,509.2 L269.2,503.3 L270.8,500.8 L273.3,501.7 L275,498.3 L276.7,501.7 L278.3,494.2 L280.8,493.3 L283.3,495 L284.7,498.3 L285.8,492.5 L287.5,494.2 L289.2,488.3 L290.8,481.7 L292.5,476.7 L295,475 L296.7,476.7 L298.3,470 L299.2,465.8 L300.8,471.7 L302.5,478.3 L304.2,472.5 L305.8,463.3 L307,457.5 L309.2,453.3 L310.8,446.7 L312.5,440 L315,435 L316.7,431.7 L319.2,429.2 L321.7,429.2 L323,430.8 L325,426.7 L326.7,420 L328.3,417.5 L330,414.2 L332.5,413.3 L334.7,416.7 L336.7,411.7 L338,409.2 L339.2,410.8 L341.7,411.7 L343.7,414.2 L345.3,413.3 L346.7,418.3 L348.3,422.5 L350,427.5 L351.3,436.7 L352.5,442.5 L354.7,445.8 L356.3,451.7 L357.5,460.8 L359.2,470 L360.3,479.2 L362,483.3 L363.3,483.3 L364.7,490 L365.8,495.8 L367.5,498.3 L369.2,497.5 L370,494.2 L371.7,500 L373.3,508.3 L375.8,509.2 L378.3,511.7 L380,508.3 L382.5,507.5 L384.7,506.7 L385.8,502.5 L387.5,501.7 L389.2,503.3 L390.8,510 L392.5,514.2 L395,517.5 L397.5,524.7 L400,525.3 L402.5,526.3 L404.2,527.5 L405.8,522.5 L407.5,518.3 L408.7,520 L410.8,517.5 L412.5,520.8 L413.3,525 L415.8,529.2 L418.3,533.3 L420,530.8 L421.7,530 L423.7,531.7 L425,535.8 L426.3,533.3 L428.3,538.3 L430,540.8 L432,545 L433.7,540.8 L435.3,540 L437.5,539.7 L439.2,540.8 L440.8,534.2 L442.5,530.8 L444.2,527.5 L445.8,520 L447.2,515 L448.7,520 L450.8,520.8 L452.5,525 L454.2,532.5 L455.8,535.3 L458.3,537 L460.8,534.7 L462.5,537.5 L465,539.2 L466.7,545 L468.3,556.7 L470,554.2 L471.7,553.3 L473.3,550.8 L474.7,555.8 L476.7,558.3 L479.2,561.7 L480.8,563.3 L482,560.8 L483.3,565 L484.7,570 L485.8,576.7 L487,586.7 L488.3,594.2 L489.7,597.5 L491.3,598 L493,594.2 L494.7,589.2 L497.5,589.2 L498.7,580 L499.7,565 L500.8,555 L502,548.3 L502.8,546.7 L504.2,550.8 L505.8,556.7 L507.5,555.8 L509.2,557.5 L510.8,555.8 L513,555 L514.7,560 L516.7,560 L518.7,561.7 L520.8,563.3 L522.5,560.8 L524.2,561.7 L526.3,558.3 L528,559.2 L529.7,557.5 L532,558.3 L534.2,559.2 L535.8,564.2 L537.5,570.8 L539.2,575 L540.8,579.2 L541.7,590 L542.5,596.7 L543.3,602.5 L545,602.5 L546.3,598.3 L547,596.7 L548.3,595.8 L550.8,594.2 L552.5,592.5 L553.7,590.8 L554.7,595 L555.8,600 L557.5,600.8 L559.2,599.2 L560.8,595 L562.5,591.7 L564.2,594.2 L566.3,596.7 L567.5,600 L569.2,596.7 L570.8,594.2 L573,593.3 L574.7,594.2 L576.7,595.8 L579.2,595.3 L580.8,599.2 L582,604.2 L583.3,607.5 L585,610 L586.7,612.5 L588.3,618.3 L590,621.7 L592.5,625 L594.2,628.3 L595.3,635 L596.3,630 L597.5,625.8 L599.2,626.7 L600.8,623.3 L602,616.7 L603.3,614.2 L605,615.8 L607,618.3 L608.7,620 L610.3,616.7 L612,618.3 L613.7,620.8 L615.3,616.7 L616.7,611.7 L618.7,612.5 L620.8,610.8 L623,608.3 L625,606.7 L627,605 L628.3,600 L629.7,588.3 L630.8,581.7 L632.5,579.7 L634.2,580 L635.8,578.3 L636.7,570 L638.3,568.3 L640,567.5 L641.3,565.3 L642.5,570.8 L644.2,575.8 L645.8,577.5 L648,576.7 L650,577.5 L650.8,575 L652.5,570.8 L654.7,568.3 L655.8,562.5 L657,551.7 L658,541.7 L661.7,541.3 L663,533.3 L664.2,525 L665.3,518.3 L666.7,512.5 L668,505 L669.2,498.3 L670,492.5 L672.5,490 L674.7,486.7 L675.8,483.3 L676.7,477.5 L678,475 L680,477.5 L682,483 L684.2,480 L685.8,477.5 L688.3,478.7 L689.7,471.7 L690.8,461.7 L692,455 L693.3,452.5 L695.8,450.8 L697.5,450 L698,441.7 L698.7,451.7 L700,460 L701.3,467.5 L703.3,473.3 L705,470 L706.7,473.3 L708.7,478.3 L710,481.7 L710,484.2 L711.3,485.8 L713.3,481.7 L715,477.5 L716.7,473.3 L717.5,460 L718.3,451.7 L720,450 L722,448.3 L723.3,452.5 L724.7,446.7 L726.3,442.5 L728,441.7 L729.2,436.7 L730.3,442.5 L731.3,452.5 L732.5,460 L735,460.8 L737.5,459.2 L738.7,465 L740.3,471.7 L742,477.5 L743.7,476.7 L745.3,483.3 L747.5,485.8 L749.2,488.3 L750.3,495.8 L751.7,503.3 L753,510 L754.7,514.2 L756.7,517.5 L758,524.2 L758,524.2 L759.2,536.7 L760.3,546.7 L761.7,556.7 L763.3,566.7 L764.7,570.8 L766.3,568.3 L768.3,571.7 L770.8,575 L772.5,579.2 L774.2,582.5 L775.8,585 L777.5,588.3 L778.7,583.3 L780,580 L782,580.3 L784.2,579.2 L785.3,570 L786.3,558.3 L787.5,553.3 L789.2,548.3 L790.8,540 L791.7,531.7 L793,525 L794.7,520.8 L796.7,518.3 L798.3,511.7 L799.7,503.3 L800.8,495 L803,492.5 L804.2,486.7 L805.3,480 L806.7,475.8 L808.3,479.2 L810,481.7 L812,479.2 L814.2,476.7 L816.7,475 L818.7,474.2 L819.7,472.5 L820.3,482.5 L821.7,486.7 L823.3,488.3 L825.3,486.7 L826.3,493.3 L827.5,501.7 L829.2,505 L830.8,507.5 L832.5,512.5 L833.7,520 L835,528.3 L836.7,531.7 L838.3,535 L840.3,539.2 L842,543.3 L844.2,547.5 L845.3,553.3 L847,557.5 L848.3,561.7 L850,565 L852,567.5 L853,570 L853.7,565.8 L855.3,565 L857.5,567.5 L859.2,564.2 L860.8,560 L862.5,559.2 L864.2,560.8 L865.3,556.7 L866.7,546.7 L868.3,539.2 L870.8,537.5 L872,531.7 L873.3,523.3 L874.7,516.7 L876.7,510.8 L878.7,506.7 L880,498.3 L881.3,488.3 L882.5,480 L884.2,475.8 L885.3,468.3 L886.3,458.3 L887.5,453.3 L888.7,450.8 L890.8,451.7 L893,449.2 L894.7,446.7 L895.8,445 L897,448.3 L898.3,451.7 L900,448.3 L901.3,445.8 L902.5,447.5 L903.3,444.2 L904.7,447.5 L905.8,445 L907,441.7 L908,448.3 L908.7,454.2 L910.8,457.5 L912.5,460 L913.7,458.3 L915,459.2 L916.7,463.3 L918.3,465.8 L919.7,464.2 L921.3,465 L922.5,470 L924.2,473.3 L925.8,476.7 L927.5,477.5 L929.7,479.2 L932,480.8 L933.3,486.7 L935,493.3 L936.7,497.5 L939.2,501.7 L940.8,508.3 L942,511.7"/>
<path stroke="#2adcd6" d="M237.5,530.8 L237.7,516.7 L237.8,503.3 L238,513.3 L238.7,503.3 L240,490 L240.8,483.3 L242.5,476.7 L244.2,463.3 L245.8,453.3 L247.5,440 L248.7,420 L249.2,403.3 L249.7,386.7 L250.2,373.3 L250.3,368.3 L251,363.3 L252.5,361.7 L255,360 L256.7,350 L258,345 L259.7,350 L261.7,355 L263.3,359.2 L265,358.3 L266.7,363.3 L268.3,367.5 L270.8,362.5 L273.3,358.3 L276.7,350 L280,343.3 L282.5,338.3 L285,328.3 L287.5,317.5 L290,303.3 L292,295 L294.2,296.7 L295.3,300 L297.5,286.7 L299.7,289.2 L301.7,285 L304.2,277.5 L305.8,275.8 L307,274.2 L308.3,275.8 L310,263.3 L311.2,256.7 L313.3,255 L315,255.8 L316.7,247.5 L318.3,253.3 L319.7,260 L321.7,256.7 L323,260.8 L324.2,255.8 L325.3,263.3 L326.7,270 L328.3,278.3 L329.7,288.3 L330.8,300 L332,308.3 L333.7,316.7 L335.3,323.3 L336.7,330 L338,340 L339.2,350 L340.8,361.7 L342,368.3 L343.3,375 L345,375 L346.7,381.7 L348.3,388.3 L350.3,395 L351.7,400.8 L352.5,408.3 L354.2,418.3 L356.3,425.8 L358,433.3 L359.2,440 L360.3,447.5 L362.5,451.7 L364.2,458.3 L365.8,466.7 L367,475 L368.3,479.2 L370.8,480.8 L373.3,484.2 L375.8,485 L378.3,483.3 L380.8,485.8 L383.3,487.5 L385.8,489.2 L387.5,493.3 L390,495.8 L391.7,499.2 L394.2,503.3 L396.7,506.7 L398.3,513.3 L400,518.3 L400.3,516.7 L402.5,522.5 L404.7,527.5 L405.8,531.7 L407.5,535.8 L410,540 L412,544.2 L414.2,549.2 L416.7,550.8 L418.7,550 L419.7,554.2 L421.7,560 L424.2,564.2 L426.7,570 L429.2,575 L431.7,578.3 L433,582.5 L434.2,588.3 L435.3,591.7 L438.3,592.5 L440.8,595 L443.3,597.5 L445.8,600.8 L447.5,605 L448.7,609.2 L451.7,609.2 L454.2,607.5 L456.7,607.5 L459.2,608.3 L460,611.3 L462,607.5 L465,606.7 L466.7,608.3 L467.5,612 L469.2,607.5 L470,604.2 L471.7,603.3 L473,602.5 L474.2,605.8 L475.3,610.8 L477.5,614.2 L480,616.7 L482,620 L483.3,622.5 L485.3,620.8 L486.7,619.2 L488.3,621.7 L490,624.2 L491.7,626.7 L493.3,618.3 L495,620 L496.7,622.5 L498.7,625 L500,620.8 L501.7,616.7 L503.3,618.3 L505.3,619.2 L507.5,621.7 L509.2,625 L510.8,629.2 L512.5,628.3 L513.7,635.8 L515.8,635 L517.5,634.2 L519.2,628.3 L520.8,621.7 L522.5,614.2 L524.2,610 L525.8,606.7 L527.5,604.2 L529.2,599.2 L530.8,595 L532.5,590 L533.7,587.5 L535,589.2 L536.7,593.3 L538.3,591.7 L540,589.2 L541.3,590.8 L542,598.3 L543,603.3 L544.7,601.7 L546.7,603.3 L549.2,604.2 L551.7,602.5 L553.3,606.7 L555,608.3 L557.5,609.2 L560,610.8 L561.7,612.5 L562.5,611.7 L564.2,615.8 L565.8,619.2 L567,623.3 L568.3,630 L569.7,636.7 L570,638.3 L572,647.5 L573.7,655.8 L575.3,664.2 L577.5,669.2 L579.7,674.2 L581.3,681.7 L583.3,685.8 L585.8,690 L587.5,695 L588.7,700 L590.8,702.5 L593.3,705 L595,709.2 L597,713.3 L598.3,712.5 L600,710.8 L602,710 L603.3,706.7 L605,703.3 L606.3,702.5 L607.5,700.8 L608.7,702.5 L610,699.2 L612.5,695.8 L614.2,691.7 L615.8,683.3 L617.5,675.8 L620,673.7 L622,672 L623,665 L623.7,655 L624.7,645 L625.3,636.7 L625.3,635 L626.7,630 L628,620 L629.2,606.7 L630,595 L630.8,588.3 L632.5,586.7 L635,584.7 L636.3,583"/>
<path stroke="#10107c" d="M237,334.2 L238.3,330 L240,335.3 L241.7,330.3 L245,330.3 L248,328.7 L249.7,333.3 L252,345 L255,352.5 L257,356.3 L258.3,365 L260.3,371.7 L262,373.7 L263,368.3 L264.2,376.7 L265,378.3 L266,371.7 L267.5,375.8 L270,375 L271.7,382.5 L274.2,385 L275.8,384.2 L278.3,380.8 L280,376.7 L282.5,373.3 L284.2,375.8 L285.8,377.5 L287.5,380.8 L289.7,383.3 L291.3,378.3 L293,377 L295,381.7 L296.7,386.7 L298.3,386.7 L300,392.5 L302.5,401.7 L304.2,390 L305.8,380 L308.3,368.3 L310.8,358.3 L312.5,349.2 L314.2,358.3 L315.8,364.2 L317.5,363.3 L320,370 L322.5,377.5 L324.2,363.3 L325.3,359.2 L327.5,358.3 L329.2,360.8 L330.8,364.2 L332.5,363.3 L334.2,357.5 L336.7,350 L338.3,354.2 L340,349.2 L342.5,348.7 L344.7,335.8 L345.8,343.3 L347.5,346.7 L349.2,340.8 L350.8,336.7 L352.5,334.2 L354.2,329.2 L355.8,330.8 L358,325.8 L359.2,330 L360.8,323.3 L363.3,319.2 L365.8,319.2 L367.5,325 L370,333.3 L371.7,331.7 L374.2,325 L376.7,319.2 L378.8,315 L380.8,307.5 L383.3,304.2 L385,296.7 L386.7,292.5 L388.3,295 L390,300 L391.7,287.5 L393,291.7 L395,283.3 L396.7,280 L398.3,280.8 L399.7,288.3 L401.7,293.3 L403.3,296.7 L405.8,304.2 L407,298.3 L408,303.3 L410,303.3 L412.5,295.8 L414.2,290.8 L415.8,290 L418.3,283.3 L420.3,293.3 L421.7,287.5 L423.3,285.8 L425.3,290.8 L427.5,295 L429.2,300 L430.8,295 L432,299.2 L433.3,294.2 L435,288.3 L437.5,290.8 L439.2,294.2 L440.8,297.5 L443.3,298.3 L445.8,310 L447.5,302.5 L450,299.2 L452.5,295.8 L455,294.2 L456.7,290 L459.2,285.8 L460.8,290 L462.5,291.7 L465.8,289.2 L467.5,283.3 L469.2,277.5 L470,276.7 L471.7,274.2 L474.2,270.8 L475.8,271.7 L478,268.3 L479.7,273.3 L480.8,278.3 L482.5,275.8 L484.2,278.3 L485.8,270 L487.5,264.2 L489.2,268.3 L490.8,271.7 L492.5,276.7 L494.2,285 L495,289.2 L496.7,289.2 L498.3,285 L499.7,289.2 L500.8,276.7 L502.5,270 L505,267.5 L507.5,265 L510,262.5 L512.5,260.8 L514.2,260 L515.3,265 L517.5,260.8 L519.2,263.3 L520.8,269.2 L522.5,270 L525,269.2 L526.7,263.3 L528.3,260.8 L530.8,256.7 L533,255 L534.7,251.7 L536.3,255.8 L538.3,258.3 L540,260 L542.5,252.5 L544.2,260 L545.8,265 L548,268.3 L549.7,264.2 L551.7,258.3 L553.3,254.2 L555.8,251.7 L557.5,249.2 L559.2,246.7 L560.8,246.7 L562.5,248.3 L564.2,246.7 L565.8,246.7 L567.5,250.8 L569.2,245 L570.8,243.3 L572.5,246.7 L574.2,244.2 L575.3,236.7 L577,237.5 L578.7,234.2 L580.8,233 L583.3,234.2 L585,229.2 L587.5,225 L590,223.3 L591.7,220 L594.2,215 L595.8,212.5 L597.5,217.5 L599.2,213.3 L600.8,215.8 L602.5,210.8 L604.2,207.5 L605.8,209.2 L607.5,204.2 L609.2,205.8 L610.8,202.5 L612.5,200.8 L613.7,199.2 L615,205.8 L616.7,211.7 L619.2,210.8 L620.8,209.7 L622.5,215 L624.2,209.2 L626.3,205.8 L628,201.7 L629.7,198.3 L631.3,200.8 L633.3,198.3 L635,196.3 L636.7,202.5 L639.2,204.2 L641.7,205.8 L644.2,203.3 L646.7,200.8 L648.3,197.5 L650.8,195.8 L652.5,199.2 L654.2,201.7 L655.3,205.8 L656.7,217.5 L658,225 L659.7,217.5 L661.3,221.7 L662.5,218.3 L663.7,214.2 L665,225 L666.7,232.5 L668.3,235 L669.7,230.8 L671.7,225.8 L674.2,218.3 L676.7,210.8 L679.2,203.3 L681.3,200.8 L683.3,205.8 L685.3,207.5 L687.5,204.2 L689.2,210 L690.8,215 L692.5,212.5 L694.2,210 L695.3,213.3 L696.7,220 L698.3,207.5 L700.8,207.5 L702.5,209.2 L703.7,217.5 L705.8,225 L707.5,220.8 L709.2,218.3 L710,216.7 L711.3,219.2 L712.5,231.7 L714.2,236.7 L715.3,239.2 L716.7,230.8 L718,229.2 L719.7,232.5 L721.3,235.8 L723,237.5 L724.7,235 L726.7,233.3 L728,230.8 L729.2,221.7 L730.8,216.7 L732.5,215.8 L734.7,215 L736.7,214.7 L738,220 L739.2,215 L740.8,209.2 L743,205 L744.2,209.2 L745.8,208.7 L747.5,210 L749.2,213.3 L750.8,209.7 L753,211.7 L754.7,213.3 L756.7,210.8 L758,205 L759.2,210 L760.8,212.5 L763,210.8 L764.2,207.5 L765.3,212.5 L766.7,215.8 L768.3,218.3 L770,220.8 L772,223.3 L774.2,222.5 L776.3,221.7 L778,222.5 L779.2,225.8 L780.8,229.2 L782.5,228.3 L784.2,223.3 L785,230 L786.3,233.3 L787.5,235.8 L788.7,239.2 L790,232.5 L791.7,229.2 L793.3,226.7 L795.8,226.3 L797,228.3 L798.3,231.7 L799.2,238.3 L800,246.7 L800.8,250.8 L802.5,250 L804.2,242.5 L805.3,241.7 L806.7,250 L808.3,247.5 L810,244.2 L811.7,238.3 L813,234.2 L814.2,230.8 L815.8,229.2 L817.5,231.7 L819.2,226.7 L820.8,223.3 L822.5,228.3 L823.7,229.2 L825,225 L826.7,220 L828.7,218.3 L830.3,215.8 L832,217.5 L834.2,215 L836.3,213.3 L838,212.5 L840,214.2 L842.5,215 L844.2,218.3 L845.3,216.7 L846.7,223.3 L848,225.8 L849.7,224.2 L851.3,227.5 L852.5,222.5 L853.7,215 L855,212.5 L856.7,209.2 L858.3,207.5 L859.5,205.5 L860.5,210 L861.3,215.8 L863,217.5 L864.7,215 L865.8,220.8 L867.5,228.3 L869.2,225 L870.8,223.3 L872,228.3 L873.3,230.8 L874.7,225.8 L875.8,232.5 L877.5,233.3 L878.7,228.3 L879.7,218.3 L880.8,215 L882.5,213.3 L884.7,212.5 L885.8,205 L887,195.8 L888.3,190.8 L890.3,190 L892.5,192.5 L893.7,189.2 L895,183.3 L896.7,181.3 L898.3,181.7 L900,185.8 L901.3,181.7 L903,189.2 L905,186.7 L907,184.7 L909.2,183 L910.8,185.3 L912.5,187.5 L913.7,181.7 L915,178.3 L917,179.2 L918.3,180.8 L919.7,185.8 L920.8,181.7 L922.5,178.3 L924.2,175.3 L926.7,174.5 L928.7,174.5 L930.3,177.5 L932.5,176.7 L934.2,174.5 L942.5,174.5"/>
<path stroke="#cc30cc" d="M237,331.7 L238.3,329.2 L240,327.5 L241.3,340 L243,353.3 L244.7,363.3 L246.3,365 L247.5,375 L249.2,380 L250.8,391.7 L252,401.7 L253.3,390 L255,382.5 L256.3,386.7 L258.3,383.3 L260,380 L261.7,375 L262.5,363.3 L264.2,373.3 L265.3,383.3 L266.7,388.3 L268,380 L269.2,368.3 L270.8,364.2 L272.5,376.7 L274.2,383.3 L275.8,389.2 L277.5,395 L278.7,408.3 L280.8,410.8 L283,414.2 L284.2,420 L285.8,435 L287.5,421.7 L288.7,420 L290,433.3 L291.3,443.3 L292.5,453.3 L294.2,460.8 L295.8,453.3 L296.7,461.7 L298,473.3 L299.2,463.3 L300.8,453.3 L302.5,440 L303.7,430 L305.3,427.5 L307,421.7 L308.3,415 L309.7,409.2 L310.8,411.7 L311.3,423.3 L312.5,393.3 L314.2,400 L315.3,401.7 L316.7,387.5 L318,396.7 L319.2,411.7 L320.8,410 L322.5,406.7 L324.2,391.7 L325.3,381.7 L326.7,388.3 L328.3,395.8 L330,380 L330.8,372.5 L332.5,377.5 L334.2,373.3 L335.3,365.8 L336.7,375 L338.3,384.2 L340.8,379.2 L343.3,379.2 L345,371.7 L346.7,368.3 L348.7,373.3 L350.3,363.3 L352.5,354.2 L353.7,343.3 L355.8,341.7 L357.5,344.2 L358.3,335.8 L359.7,340 L361.7,345 L363.3,355 L364.7,346.7 L365.3,355 L366.7,340.8 L369.2,343.3 L370.8,346.7 L372,353.3 L373.3,340.8 L375,343.3 L377.5,349.2 L379.2,331.7 L380.8,320.8 L382.5,320 L384.2,320.8 L385.3,325.8 L387.5,321.7 L390,320.8 L391.7,318.3 L393,323.3 L394.2,332.5 L396.7,336.7 L397.5,339.2 L398.7,335.8 L400.8,352.5 L402.5,350.8 L404.2,346.7 L405.3,336.7 L406.7,334.2 L408.3,332.5 L410,335 L411.7,336.7 L412.5,346.7 L414.2,350 L416.7,356.7 L418.3,359.2 L420.3,358.3 L421.3,346.7 L423.3,344.2 L425,331.7 L427.5,320.8 L430,315 L432.5,303.3 L434.2,300 L436.7,301.7 L438.3,303.3 L440,295 L441.7,287.5 L444.2,286.7 L445.8,288.3 L447.5,284.2 L449.2,283.3 L450.8,288.3 L452.5,281.7 L453.3,295 L455,299.2 L456.7,295.8 L458.3,288.3 L460,280 L460.8,272.5 L463.3,271.7 L466.7,270 L468.3,272.5 L469.7,280 L470,280 L471.7,285 L473.3,290.8 L475,281.7 L477.5,271.7 L480,265 L482.5,256.7 L484.2,251.7 L485.8,247.5 L487.5,250 L489.7,251.7 L491.3,250 L492.5,256.7 L494.2,265 L495.3,253.3 L496.7,252.5 L498.3,256.7 L499.7,263.3 L500.8,275.8 L502.5,266.7 L505,258.3 L507.5,251.7 L509.2,245.8 L510.8,246.7 L512.5,240 L514.2,234.2 L515.8,232.5 L517.5,235 L519.2,237.5 L520.5,244.2 L522,249.2 L523.3,243.3 L524.2,236.7 L525.8,254.2 L527.5,263.3 L528.7,269.2 L530,263.3 L531.7,262.5 L533.3,255 L535,243.3 L536.7,234.2 L538.3,233.3 L540,235 L541.7,231.7 L543.3,227.5 L544.7,223.3 L545.8,225.8 L547.5,235 L548.7,230.8 L550,225.8 L551.7,224.2 L553.3,228.3 L555,233.3 L556.7,227.5 L558.3,225 L560,229.2 L561.7,225.8 L563.3,228.3 L565,231.7 L566.7,234.2 L568.3,228.3 L570,224.2 L571.3,221.7 L573,225 L574.2,224.2 L575.3,230 L576.7,223.3 L579.2,222.5 L580.8,219.2 L583.3,216.7 L585,217.5 L586.7,219.2 L588.7,220 L590,214.2 L591.7,213.3 L593.3,210.8 L595,207.5 L596.7,205 L598.3,204.2 L600,207.5 L601.7,203.3 L603.3,205 L604.7,202.5 L605.8,207.5 L607.5,208.3 L608.3,216.7 L609.2,227.5 L610.3,235.8 L611.7,233.3 L613.3,234.2 L614.7,232.5 L615.8,240 L617.5,247.5 L619.2,240 L620.8,231.7 L622,230.8 L623,236.7 L624.2,247.5 L625.8,254.2 L627,255.8 L628.3,250 L630,245.8 L632.5,240 L635,234.2 L636.7,231.3"/>
</g>
<g fill="none" stroke-width="2">
<path stroke="#800080" d="M500,195 L942.5,217"/>
<path stroke="#800000" d="M500,220.8 L942.5,243"/>
<path stroke="#008080" d="M500.5,249.7 L942.5,270.7"/>
</g>
<g font-family="Liberation Sans, sans-serif" font-size="14.4" fill="#000">
<text x="224" y="179.7" text-anchor="end">120</text>
<text x="224" y="237.4" text-anchor="end">110</text>
<text x="224" y="295.2" text-anchor="end">100</text>
<text x="224" y="352.9" text-anchor="end">90</text>
<text x="224" y="410.7" text-anchor="end">80</text>
<text x="224" y="468.4" text-anchor="end">70</text>
<text x="224" y="526.2" text-anchor="end">60</text>
<text x="224" y="584.0" text-anchor="end">50</text>
<text x="224" y="641.7" text-anchor="end">40</text>
<text x="224" y="699.5" text-anchor="end">30</text>
<text x="224" y="757.2" text-anchor="end">20</text>
<text transform="translate(241.7,764) rotate(-90)" text-anchor="end">1/2/2003</text>
<text transform="translate(271.7,764) rotate(-90)" text-anchor="end">2/2/2003</text>
<text transform="translate(298.8,764) rotate(-90)" text-anchor="end">3/2/2003</text>
<text transform="translate(328.9,764) rotate(-90)" text-anchor="end">4/2/2003</text>
<text transform="translate(357.9,764) rotate(-90)" text-anchor="end">5/2/2003</text>
<text transform="translate(388.0,764) rotate(-90)" text-anchor="end">6/2/2003</text>
<text transform="translate(417.0,764) rotate(-90)" text-anchor="end">7/2/2003</text>
<text transform="translate(447.0,764) rotate(-90)" text-anchor="end">8/2/2003</text>
<text transform="translate(477.1,764) rotate(-90)" text-anchor="end">9/2/2003</text>
<text transform="translate(506.1,764) rotate(-90)" text-anchor="end">10/2/2003</text>
<text transform="translate(536.2,764) rotate(-90)" text-anchor="end">11/2/2003</text>
<text transform="translate(565.2,764) rotate(-90)" text-anchor="end">12/2/2003</text>
<text transform="translate(595.2,764) rotate(-90)" text-anchor="end">1/2/2004</text>
<text transform="translate(625.3,764) rotate(-90)" text-anchor="end">2/2/2004</text>
<text transform="translate(653.4,764) rotate(-90)" text-anchor="end">3/2/2004</text>
<text transform="translate(683.4,764) rotate(-90)" text-anchor="end">4/2/2004</text>
<text transform="translate(712.4,764) rotate(-90)" text-anchor="end">5/2/2004</text>
<text transform="translate(742.5,764) rotate(-90)" text-anchor="end">6/2/2004</text>
<text transform="translate(771.5,764) rotate(-90)" text-anchor="end">7/2/2004</text>
<text transform="translate(801.6,764) rotate(-90)" text-anchor="end">8/2/2004</text>
<text transform="translate(831.6,764) rotate(-90)" text-anchor="end">9/2/2004</text>
<text transform="translate(860.6,764) rotate(-90)" text-anchor="end">10/2/2004</text>
<text transform="translate(890.7,764) rotate(-90)" text-anchor="end">11/2/2004</text>
<text transform="translate(919.7,764) rotate(-90)" text-anchor="end">12/2/2004</text>
</g>
<rect x="979.5" y="369.5" width="240" height="168" fill="#fff" stroke="#000" shape-rendering="crispEdges"/>
<g font-family="Liberation Sans, sans-serif" font-size="14.5" fill="#000">
<path d="M984,382.5 H1012" stroke="#000080" stroke-width="1" shape-rendering="crispEdges"/>
<text x="1016" y="387.2">2003--&gt; 2004</text>
<path d="M984,406.5 H1012" stroke="#c040c0" stroke-width="1" shape-rendering="crispEdges"/>
<text x="1016" y="411.1">2009</text>
<path d="M984,430.5 H1012" stroke="#3d8a68" stroke-width="1" shape-rendering="crispEdges"/>
<text x="1016" y="435.0">2003 norm, avg 30 day volume</text>
<path d="M984,454.5 H1012" stroke="#36d6cc" stroke-width="1" shape-rendering="crispEdges"/>
<text x="1016" y="458.9">2009 norm, avg 30 day volume</text>
<path d="M984,478 H1012" stroke="#800080" stroke-width="2" shape-rendering="crispEdges"/>
<text x="1016" y="482.8">Top 2004 trend</text>
<path d="M984,502 H1012" stroke="#800000" stroke-width="2" shape-rendering="crispEdges"/>
<text x="1016" y="506.7">Bottom 2004 trend</text>
<path d="M984,526 H1012" stroke="#008080" stroke-width="2" shape-rendering="crispEdges"/>
<text x="1016" y="530.6">Bottom 2010 trend</text>
</g>
</svg>
<div class="abs" style="left:236px;top:173px;width:708px;height:3px;background:repeating-linear-gradient(90deg,#000 0 1px,#fff 1px 2px)"></div>
<div class="abs" style="left:236px;top:751px;width:708px;height:3px;background:repeating-linear-gradient(90deg,#000 0 1px,#fff 1px 2px)"></div>
<div class="abs" style="left:235px;top:174px;width:3px;height:579px;background:repeating-linear-gradient(180deg,#000 0 1px,#fff 1px 2px)"></div>
<div class="dither" style="left:941px;top:174px;width:3px;height:579px"></div>
<div class="abs" style="left:233.0px;top:171.0px;width:6px;height:6px;background:#000"></div>
<div class="abs" style="left:235.0px;top:173.0px;width:3px;height:1px;background:#fff"></div>
<div class="abs" style="left:236.0px;top:175.0px;width:1px;height:1px;background:#fff"></div>
<div class="abs" style="left:586.0px;top:171.0px;width:6px;height:6px;background:#000"></div>
<div class="abs" style="left:588.0px;top:173.0px;width:3px;height:1px;background:#fff"></div>
<div class="abs" style="left:589.0px;top:175.0px;width:1px;height:1px;background:#fff"></div>
<div class="abs" style="left:939.0px;top:171.0px;width:6px;height:6px;background:#000"></div>
<div class="abs" style="left:941.0px;top:173.0px;width:3px;height:1px;background:#fff"></div>
<div class="abs" style="left:942.0px;top:175.0px;width:1px;height:1px;background:#fff"></div>
<div class="abs" style="left:233.0px;top:460.0px;width:6px;height:6px;background:#000"></div>
<div class="abs" style="left:235.0px;top:462.0px;width:3px;height:1px;background:#fff"></div>
<div class="abs" style="left:236.0px;top:464.0px;width:1px;height:1px;background:#fff"></div>
<div class="abs" style="left:939.0px;top:460.0px;width:6px;height:6px;background:#000"></div>
<div class="abs" style="left:941.0px;top:462.0px;width:3px;height:1px;background:#fff"></div>
<div class="abs" style="left:942.0px;top:464.0px;width:1px;height:1px;background:#fff"></div>
<div class="abs" style="left:233.0px;top:749.0px;width:6px;height:6px;background:#000"></div>
<div class="abs" style="left:235.0px;top:751.0px;width:3px;height:1px;background:#fff"></div>
<div class="abs" style="left:236.0px;top:753.0px;width:1px;height:1px;background:#fff"></div>
<div class="abs" style="left:586.0px;top:749.0px;width:6px;height:6px;background:#000"></div>
<div class="abs" style="left:588.0px;top:751.0px;width:3px;height:1px;background:#fff"></div>
<div class="abs" style="left:589.0px;top:753.0px;width:1px;height:1px;background:#fff"></div>
<div class="abs" style="left:939.0px;top:749.0px;width:6px;height:6px;background:#000"></div>
<div class="abs" style="left:941.0px;top:751.0px;width:3px;height:1px;background:#fff"></div>
<div class="abs" style="left:942.0px;top:753.0px;width:1px;height:1px;background:#fff"></div>
<div class="abs" style="left:485px;top:475px;width:53px;height:17px;box-sizing:border-box;background:#ffffe1;border:1px solid;border-color:#e4e3cf #000 #000 #e4e3cf"></div>
<div class="t" style="left:488px;top:478px;font-size:11px">Plot Area</div>
<div class="abs" style="left:0;top:833px;width:1440px;height:17px;background:#ece9d8"></div>
<div class="abs" style="left:3px;top:834px;width:14.5px;height:15px;box-sizing:border-box;border:1px solid;border-color:#fff #aca899 #aca899 #fff"></div>
<div class="abs" style="left:17.5px;top:834px;width:15.5px;height:15px;box-sizing:border-box;border:1px solid;border-color:#fff #aca899 #aca899 #fff"></div>
<div class="abs" style="left:33px;top:834px;width:16px;height:15px;box-sizing:border-box;border:1px solid;border-color:#fff #aca899 #aca899 #fff"></div>
<div class="abs" style="left:49px;top:834px;width:16px;height:15px;box-sizing:border-box;border:1px solid;border-color:#fff #aca899 #aca899 #fff"></div>
<svg class="abs" style="left:0px;top:834px" width="70" height="15" viewBox="0 0 70 15" ><rect x="6" y="3" width="1.6" height="8" fill="#000"/><path d="M13,3 V11 L8,7 Z" fill="#000"/><path d="M29,3 V11 L24,7 Z" fill="#000"/><path d="M40,3 V11 L45,7 Z" fill="#000"/><path d="M55,3 V11 L60,7 Z" fill="#000"/><rect x="60.5" y="3" width="1.6" height="8" fill="#000"/></svg>
<svg class="abs" style="left:0px;top:0px" width="900" height="900" viewBox="0 0 900 900" ><path d="M0,833.5 H858" stroke="#8c8c8c" stroke-width="1" shape-rendering="crispEdges"/><path d="M174.3,834 L181.2,848.5 H229 L235.3,834 Z" fill="#fff"/><path d="M175,833.5 H235" stroke="#fff" stroke-width="1" shape-rendering="crispEdges"/><path d="M66.5,834 L73,848.5" stroke="#000" stroke-width="1.2"/><path d="M127,834 L120.8,848.5" stroke="#000" stroke-width="1.2"/><path d="M123.2,843.6 L126.4,848.5" stroke="#000" stroke-width="1.2"/><path d="M174.3,834 L181.2,848.5" stroke="#000" stroke-width="1.2"/><path d="M178.5,843.6 L175.5,848.5" stroke="#000" stroke-width="1.2"/><path d="M235.3,834 L229,848.5" stroke="#000" stroke-width="1.2"/><path d="M232.2,843.6 L234.8,848.5" stroke="#000" stroke-width="1.2"/><path d="M291.5,834 L285.3,848.5" stroke="#000" stroke-width="1.2"/><path d="M288.2,843.6 L291,848.5" stroke="#000" stroke-width="1.2"/><path d="M356.1,834 L349.9,848.5" stroke="#000" stroke-width="1.2"/><path d="M73,848.5 H121" stroke="#6a6a6a" stroke-width="1" shape-rendering="crispEdges"/><path d="M126.4,848.5 H175.5" stroke="#6a6a6a" stroke-width="1" shape-rendering="crispEdges"/><path d="M181.2,848.5 H229" stroke="#6a6a6a" stroke-width="1" shape-rendering="crispEdges"/><path d="M234.8,848.5 H285.3" stroke="#6a6a6a" stroke-width="1" shape-rendering="crispEdges"/><path d="M291,848.5 H349.9" stroke="#6a6a6a" stroke-width="1" shape-rendering="crispEdges"/></svg>
<div class="t" style="left:79px;top:836px;font-size:12px;letter-spacing:-0.3px">Chart1</div>
<div class="t" style="left:133px;top:836px;font-size:12px;letter-spacing:-0.1px">Chart2</div>
<div class="t" style="left:184px;top:836px;font-size:12px;font-weight:bold;letter-spacing:0.55px">Chart4</div>
<div class="t" style="left:240px;top:836px;font-size:12px;">Sheet1</div>
<div class="t" style="left:296px;top:836px;font-size:12px;letter-spacing:0.3px;word-spacing:1.5px">table (6)</div>
<div class="abs" style="left:854px;top:834px;width:4px;height:15px;border-left:1px solid #fff;box-sizing:border-box"></div><div class="abs" style="left:858px;top:834px;width:2px;height:15px;background:#000"></div>
<div class="btn3d" style="left:860px;top:834px;width:17px;height:16px"></div><svg class="abs" style="left:866px;top:838px" width="4" height="7" viewBox="0 0 4 7" shape-rendering="crispEdges"><path d="M4,0 V7 L0,3.5 Z" fill="#000"/></svg>
<div class="btn3d" style="left:877px;top:834px;width:529px;height:16px"></div>
<div class="dither" style="left:1403px;top:834px;width:3px;height:15px"></div>
<div class="btn3d" style="left:1406px;top:834px;width:16px;height:16px"></div><svg class="abs" style="left:1412px;top:838px" width="4" height="7" viewBox="0 0 4 7" shape-rendering="crispEdges"><path d="M0,0 V7 L4,3.5 Z" fill="#000"/></svg>
<div class="abs" style="left:0;top:850px;width:1440px;height:21px;background:#ece9d8"></div>
<div class="abs" style="left:0;top:850px;width:1440px;height:1px;background:#fff"></div>
<div class="t" style="left:8px;top:857px;font-size:11.5px">Ready</div>
<div class="sunk" style="left:1078px;top:853px;width:32px;height:17px"></div>
<div class="sunk" style="left:1114px;top:853px;width:129px;height:17px"></div>
<div class="sunk" style="left:1246px;top:853px;width:27px;height:17px"></div>
<div class="sunk" style="left:1276px;top:853px;width:35px;height:17px"></div>
<div class="sunk" style="left:1313px;top:853px;width:30px;height:17px"></div>
<div class="sunk" style="left:1346px;top:853px;width:32px;height:17px"></div>
<div class="sunk" style="left:1381px;top:853px;width:29px;height:17px"></div>
<div class="sunk" style="left:1413px;top:853px;width:23px;height:17px"></div>
<div class="abs" style="left:1070px;top:853px;width:2px;height:17px;border-left:1px solid #c9c5b2;border-right:1px solid #fff;box-sizing:border-box"></div>
<div class="t" style="left:1316px;top:857px;font-size:11.5px">NUM</div>
<div class="abs" style="left:0;top:870px;width:1440px;height:30px;background:linear-gradient(to bottom,#3168d5 0%,#4993e6 4%,#3a80e8 10%,#2663df 20%,#245edb 50%,#2562df 80%,#1f55c8 92%,#1941a5 100%)"></div>
<div class="abs" style="left:0;top:870px;width:97px;height:30px;border-radius:0 9px 12px 0 / 0 14px 16px 0;background:linear-gradient(to bottom,#3c8a3c 0%,#62b462 5%,#4aa64a 12%,#3c983c 25%,#399339 55%,#3a963a 80%,#2f7f2f 93%,#256a25 100%);box-shadow:inset -4px 0 6px -1px rgba(0,50,0,.55), inset 2px 0 2px -1px rgba(0,50,0,.6), 1px 0 2px rgba(0,0,80,.55)"></div>
<svg class="abs" style="left:10px;top:875px" width="21" height="20" viewBox="0 0 21 20" style="filter:drop-shadow(1px 1px 1px rgba(0,40,0,.5))"><path d="M2.6,3.6 C4.8,1.8 7.4,1.8 9.8,3.4 L8.6,9.6 C6.4,8.2 4,8.2 1.4,9.8 Z" fill="#e4572a"/><path d="M11,4 C13.2,5.6 15.8,5.6 18.4,4 L17.2,10.2 C14.6,11.8 12,11.8 9.8,10.2 Z" fill="#86c232"/>
<path d="M1.2,11.2 C3.6,9.8 6,9.8 8.4,11.2 L7.2,17.2 C4.8,15.8 2.4,15.8 0,17.4 Z" fill="#3f78e8"/><path d="M9.6,11.8 C11.8,13.4 14.4,13.4 17,11.8 L15.8,17.8 C13.2,19.4 10.6,19.4 8.4,17.8 Z" fill="#f2c224"/></svg>
<div class="t" style="left:35px;top:876px;font-size:18px;font-weight:bold;font-style:italic;color:#fff;text-shadow:1px 1px 1px #1e4d1e;letter-spacing:-0.3px">start</div>
<svg class="abs" style="left:108px;top:875px" width="20" height="20" viewBox="0 0 20 20" ><text x="3" y="16.5" font-family="Liberation Sans" font-weight="bold" font-style="italic" font-size="20" fill="#4cacfa" stroke="#2a7ae0" stroke-width=".5">e</text><path d="M3.5,6.5 h8" stroke="#d8f0ff" stroke-width="1" opacity=".7"/><path d="M18,3.5 C13,0 3,8 2.2,14.4 C2,16.6 4.4,17 7,15.6" fill="none" stroke="#f0b428" stroke-width="1.7"/><path d="M12.5,2.6 C15.5,1.2 18.5,1.6 18,3.5" fill="none" stroke="#f0b428" stroke-width="1.4"/></svg>
<svg class="abs" style="left:132px;top:876px" width="16" height="19" viewBox="0 0 16 19" ><path d="M3,9 H13 L12,18 H4 Z" fill="#c88a3a" stroke="#7a4a10" stroke-width=".6"/><path d="M5,9 L3,1 M8,9 L8,0.5 M11,9 L13.5,1.5" stroke-width="1.8" stroke="#e8c020"/><path d="M6.5,9 L6,2" stroke="#d03020" stroke-width="1.5"/><path d="M9.5,9 L10.5,2.5" stroke="#3060d0" stroke-width="1.5"/></svg>
<svg class="abs" style="left:154px;top:877px" width="18" height="17" viewBox="0 0 18 17" ><rect x="2.5" y="2" width="13" height="12.5" rx="2.5" fill="#eef4ff" stroke="#3a78e0" stroke-width="1.5"/><path d="M6.5,11.5 V5.5 H11 M6.5,8.5 H10" stroke="#2a50a8" stroke-width="1.6" fill="none"/><path d="M11,4 l3.5,-2 M11,12 l4,1" stroke="#80b0ff" stroke-width="1.4"/><path d="M0.5,6 h3 M0.5,10 h3" stroke="#3a78e0" stroke-width="1.3"/></svg>
<svg class="abs" style="left:178px;top:876px" width="15" height="19" viewBox="0 0 15 19" ><rect x="1.5" y="1" width="12" height="17" rx="1" fill="#9ab4e8" stroke="#dfe8ff" stroke-width="1"/><rect x="3" y="3" width="9" height="3.5" fill="#e8f0ff"/><path d="M3.5,9 h8 M3.5,11.5 h8 M3.5,14 h8 M3.5,16 h8" stroke="#5a78c0" stroke-width="1.4" stroke-dasharray="2 1"/></svg>
<svg class="abs" style="left:199px;top:877px" width="20" height="17" viewBox="0 0 20 17" ><path d="M1,4 H7 L9,6 H16 V15 H1 Z" fill="#f0c850" stroke="#a07818" stroke-width=".8"/><path d="M5,7.5 H11 L12.5,9 H19 V16 H5 Z" fill="#f8dc78" stroke="#a07818" stroke-width=".8"/><rect x="8" y="2" width="7" height="5" fill="#e8f0ff" stroke="#8090b0" stroke-width=".6"/></svg>
<svg class="abs" style="left:224px;top:878px" width="16" height="16" viewBox="0 0 16 16" ><g transform="scale(.89)"><circle cx="9" cy="9" r="8.5" fill="#e03a2a"/><path d="M9,9 L1.7,4.7 A8.5,8.5 0 0 0 6,17 Z" fill="#3aa84a"/><path d="M9,9 L6,17 A8.5,8.5 0 0 0 17.4,7.5 Z" fill="#f8cc30"/><circle cx="9" cy="9" r="4.2" fill="#fff"/><circle cx="9" cy="9" r="3.2" fill="#4a8af0"/></g></svg>
<svg class="abs" style="left:245px;top:877px" width="18" height="18" viewBox="0 0 18 18" ><circle cx="9" cy="9" r="8.3" fill="#3a56c4"/><circle cx="8" cy="7" r="4.5" fill="#5a7ae0"/><path d="M0.8,8 C0.5,13.5 5,17.6 9.5,17.4 C14.5,17.2 17.8,13 17.3,8.2 C17,5.5 15.6,3.6 14,2.6 C15,4.6 15,6.6 14.2,7.8 C13.6,5.6 12,4.4 10.2,4.4 C11.6,5.6 11.8,7 11,8.2 C9.6,8 8.6,8.6 8.6,9.8 C8.6,11 9.8,11.6 11,11.2 C10.4,12.8 8.4,13.6 6.6,12.8 C4.6,12 3.8,9.8 4.6,8 C3.8,8.2 3.2,8.8 3,9.6 C2.6,7.6 3.2,5.8 4.6,4.6 C3,5 1.6,6.2 0.8,8 Z" fill="#ee7a18"/><path d="M2,12 C4,16 9,17.5 13,15.5" stroke="#f8c040" stroke-width="1.3" fill="none"/></svg>
<svg class="abs" style="left:268px;top:876px" width="18" height="19" viewBox="0 0 18 19" ><rect x="3" y="2" width="11" height="15" fill="#f4f8ff" stroke="#7a90c0" stroke-width=".8"/><path d="M3,2 h11" stroke="#506090" stroke-width="2" stroke-dasharray="1 1"/><path d="M6,14 L15,3 L17,4.5 L8,15.5 L5.5,16.5 Z" fill="#4a8ae8" stroke="#1a3a90" stroke-width=".5"/></svg>
<div class="task" style="left:308px"><svg class="abs" style="left:8px;top:3px" width="17" height="17" viewBox="0 0 17 17" ><rect x="3" y="0.5" width="10" height="15" rx="1" fill="#9ab4e8" stroke="#dfe8ff" stroke-width=".8"/><rect x="4.5" y="2" width="7" height="3" fill="#e8f0ff"/><path d="M4.5,7 h7 M4.5,9.5 h7 M4.5,12 h7 M4.5,14 h7" stroke="#5a78c0" stroke-width="1.2" stroke-dasharray="1.6 1"/></svg><div class="lbl"><b style="color:#ffc87a">2</b> Windo…</div><svg class="abs" style="left:95px;top:10px" width="5" height="3" viewBox="0 0 5 3" shape-rendering="crispEdges"><path d="M0,0 H5 L2.5,3 Z" fill="#fff"/></svg></div>
<div class="task" style="left:414px"><svg class="abs" style="left:8px;top:3px" width="17" height="17" viewBox="0 0 17 17" ><circle cx="8" cy="4" r="3.3" fill="#fff" stroke="#222" stroke-width=".8"/><circle cx="4" cy="11" r="3.3" fill="#fff" stroke="#222" stroke-width=".8"/><circle cx="12" cy="11.5" r="3.3" fill="#20c0b0" stroke="#0a6a60" stroke-width=".8"/><path d="M6.5,6.5 L5,8.5 M9.5,6.5 L11,8.8" stroke="#222" stroke-width="1.6"/></svg><div class="lbl">SonicStage</div></div>
<div class="task" style="left:520px"><svg class="abs" style="left:8px;top:3px" width="17" height="17" viewBox="0 0 17 17" ><path d="M4,1 H12 L13,10 H5 Z" fill="#9ad0f8" stroke="#e8f4ff" stroke-width=".8"/><path d="M5,12 H13 L14,15.5 H4 Z" fill="#d8e4f4" stroke="#8098c0" stroke-width=".6"/><path d="M6,2.5 L10,2.5 L10.5,8 L6.5,8Z" fill="#5aa8f0"/></svg><div class="lbl"><b style="color:#ffc87a">4</b> Windo…</div><svg class="abs" style="left:95px;top:10px" width="5" height="3" viewBox="0 0 5 3" shape-rendering="crispEdges"><path d="M0,0 H5 L2.5,3 Z" fill="#fff"/></svg></div>
<div class="task" style="left:626px"><svg class="abs" style="left:8px;top:3px" width="17" height="17" viewBox="0 0 17 17" ><circle cx="8" cy="8" r="7.5" fill="#e03a2a"/><path d="M8,8 L1.5,4.2 A7.5,7.5 0 0 0 5.3,15 Z" fill="#3aa84a"/><path d="M8,8 L5.3,15 A7.5,7.5 0 0 0 15.4,6.7 Z" fill="#f8cc30"/><circle cx="8" cy="8" r="3.7" fill="#fff"/><circle cx="8" cy="8" r="2.8" fill="#4a8af0"/></svg><div class="lbl"><b style="color:#ffc87a">3</b> Google…</div><svg class="abs" style="left:95px;top:10px" width="5" height="3" viewBox="0 0 5 3" shape-rendering="crispEdges"><path d="M0,0 H5 L2.5,3 Z" fill="#fff"/></svg></div>
<div class="task" style="left:732px"><svg class="abs" style="left:8px;top:3px" width="17" height="17" viewBox="0 0 17 17" ><rect x="0.5" y="0.5" width="15" height="15" fill="#2a7a3a" stroke="#0d4a1a"/><path d="M8,2 L12,13 H4 Z" fill="#e8f4e0"/><path d="M8,2 L2,9 M8,2 L14,9 M8,2 V13" stroke="#d0e8c8" stroke-width=".8"/></svg><div class="lbl">Fidelity Ac…</div></div>
<div class="task act" style="left:838px"><svg class="abs" style="left:8px;top:3px" width="17" height="17" viewBox="0 0 17 17" ><rect x="0.5" y="0.5" width="15" height="15" fill="#2e6b3a" stroke="#9fd0a0"/><path d="M3.5,3.5 L12.5,12.5 M12.5,3.5 L3.5,12.5" stroke="#fff" stroke-width="2"/></svg><div class="lbl">Microsoft …</div></div>
<div class="task" style="left:944px"><svg class="abs" style="left:8px;top:3px" width="17" height="17" viewBox="0 0 17 17" ><rect x="0.5" y="0.5" width="15" height="15" fill="#fff" stroke="#1a2a80"/><rect x="1" y="3" width="9" height="10" fill="#2a4ab8"/><path d="M2.5,5 L4,11 L5.5,6.5 L7,11 L8.5,5" stroke="#fff" stroke-width="1.2" fill="none"/><path d="M11.5,4 h3 M11.5,7 h3 M11.5,10 h3" stroke="#1a2a80" stroke-width=".8"/></svg><div class="lbl">Document…</div></div>
<div class="task" style="left:1050px"><svg class="abs" style="left:8px;top:3px" width="17" height="17" viewBox="0 0 17 17" ><path d="M3,8 H13 L12,15.5 H4 Z" fill="#c88a3a" stroke="#7a4a10" stroke-width=".6"/><path d="M5,8 L3,1 M8,8 L8,0.5 M11,8 L13.5,1.5" stroke-width="1.7" stroke="#e8c020"/><path d="M6.5,8 L6,2" stroke="#d03020" stroke-width="1.4"/><path d="M9.5,8 L10.5,2.5" stroke="#30a040" stroke-width="1.4"/></svg><div class="lbl">SPY2004T…</div></div>
<div class="task" style="left:1156px"><svg class="abs" style="left:8px;top:3px" width="17" height="17" viewBox="0 0 17 17" ><ellipse cx="8.5" cy="8.5" rx="8.5" ry="3.6" fill="none" stroke="#f0b030" stroke-width="1.5" transform="rotate(-30 8.5 8.5)"/><text x="3" y="14" font-family="Liberation Sans" font-weight="bold" font-style="italic" font-size="16" fill="#4aa4f4" stroke="#1a5ac0" stroke-width=".4">e</text></svg><div class="lbl">Yahoo! - …</div></div>
<svg class="abs" style="left:1279px;top:879px" width="14" height="15" viewBox="0 0 14 15" ><path d="M0.7,0.7 H12.3 V10.3 H9.3 L10.3,13.8 L6.3,10.3 H0.7 Z" fill="#ffffe1" stroke="#000" stroke-width="1.3"/><text x="3.3" y="9.2" font-family="Liberation Sans" font-weight="bold" font-size="9.5" fill="#000">?</text></svg>
<svg class="abs" style="left:1303px;top:876px" width="11" height="9" viewBox="0 0 11 9" ><path d="M3.5,1 H10 V5.5 H8 M3.5,1 V3" stroke="#fff" stroke-width="1.3" fill="none"/><rect x="1" y="3.5" width="6.5" height="4.5" fill="none" stroke="#fff" stroke-width="1.3"/></svg>
<svg class="abs" style="left:1304px;top:889px" width="7" height="4" viewBox="0 0 7 4" shape-rendering="crispEdges"><path d="M0,0 H7 L3.5,4 Z" fill="#fff"/></svg>
<div class="abs" style="left:1329px;top:870px;width:111px;height:30px;background:linear-gradient(to bottom,#1a8ae0 0%,#3ab0f8 5%,#18a0f0 12%,#1290e8 30%,#1290e8 70%,#0f80d8 90%,#0a60b0 100%);border-left:1px solid #0a50a0;box-sizing:border-box"></div>
<svg class="abs" style="left:1319px;top:875px" width="21" height="21" viewBox="0 0 21 21" ><circle cx="10.5" cy="10.5" r="9.5" fill="#2a7ae8" stroke="#cfe4ff" stroke-width="1"/><circle cx="9" cy="8.5" r="6" fill="#5aa0f8" opacity=".6"/><path d="M12.5,6 L8,10.5 L12.5,15" fill="none" stroke="#fff" stroke-width="2.2"/></svg>
<svg class="abs" style="left:1343px;top:876px" width="22" height="17" viewBox="0 0 22 17" ><rect x="1" y="3" width="9" height="7" fill="#8a98a8" stroke="#303840" stroke-width=".8"/><rect x="2.3" y="4.3" width="6.4" height="4.4" fill="#3858a8"/><path d="M3,12.5 H9 M5.5,10 V12.5" stroke="#404850" stroke-width="1.4"/><path d="M12,3.5 A4,4 0 0 1 12,8.5 M14.5,2 A6.5,6.5 0 0 1 14.5,10 M17,0.8 A9,9 0 0 1 17,11.2" fill="none" stroke="#e8f0ff" stroke-width="1.1"/></svg>
<svg class="abs" style="left:1364px;top:877px" width="13" height="17" viewBox="0 0 13 17" ><rect x="4.5" y="1" width="4" height="4" fill="#f0f0f0" stroke="#404040" stroke-width=".7"/><rect x="5.3" y="5" width="2.4" height="7" fill="#a0a8b0" stroke="#404040" stroke-width=".5"/><path d="M1,14.5 H12" stroke="#d8c8a0" stroke-width="2.4"/><path d="M2.5,12.8 H10.5" stroke="#707880" stroke-width="1.4"/></svg>
<div class="t" style="left:1382px;top:880px;font-size:11px;color:#fff;letter-spacing:-0.45px">10:18 PM</div>
<svg class="abs" style="left:1150px;top:0px" width="96" height="96" viewBox="0 0 96 96" >
<defs>
<linearGradient id="pg" x1="0" y1="1" x2="1" y2="0"><stop offset="0" stop-color="#ecebbc" stop-opacity=".15"/><stop offset=".22" stop-color="#e9e8b6" stop-opacity=".7"/><stop offset=".6" stop-color="#e6e5ae" stop-opacity=".95"/><stop offset="1" stop-color="#e2e1aa" stop-opacity="1"/></linearGradient>
<clipPath id="pc"><path d="M59,24 L93,21 L86.7,37 L82,52 L76.5,72 L61,90 L1,78 L34,46 Z"/></clipPath>
<filter id="bl" x="-50%" y="-50%" width="200%" height="200%"><feGaussianBlur stdDeviation="2.2"/></filter>
<filter id="b1" x="-20%" y="-20%" width="140%" height="140%"><feGaussianBlur stdDeviation=".45"/></filter>
</defs>
<path d="M59,24 L93,21 L86.7,37 L82,52 L76.5,72 L61,90 L1,78 L34,46 Z" fill="url(#pg)"/>
<g clip-path="url(#pc)">
<g stroke="#c6c58a" stroke-width=".9" fill="none"><path d="M61.0,25.5 L92.0,22.2" opacity="0.75"/><path d="M57.4,28.9 L90.0,26.4" opacity="0.72"/><path d="M53.8,32.2 L88.4,30.7" opacity="0.69"/><path d="M50.1,35.6 L86.9,35.0" opacity="0.67"/><path d="M46.5,39.0 L85.5,39.2" opacity="0.64"/><path d="M42.9,42.4 L84.2,43.5" opacity="0.61"/><path d="M39.2,45.8 L82.8,47.7" opacity="0.58"/><path d="M35.6,49.1 L81.6,52.0" opacity="0.55"/><path d="M32.0,52.5 L80.3,56.2" opacity="0.53"/><path d="M28.4,55.9 L79.1,60.5" opacity="0.50"/><path d="M24.8,59.2 L77.9,64.7" opacity="0.47"/><path d="M21.1,62.6 L76.7,69.0" opacity="0.44"/><path d="M17.5,66.0 L75.5,73.2" opacity="0.41"/><path d="M13.9,69.4 L71.6,77.7" opacity="0.38"/><path d="M10.2,72.8 L67.8,82.2" opacity="0.36"/><path d="M6.6,76.1 L63.9,86.7" opacity="0.33"/><path d="M3.0,79.5 L60.0,91.2" opacity="0.30"/></g>
<rect x="33.9" y="33.7" width="1.6" height="1" fill="#fffff0" opacity=".35"/><rect x="60.1" y="28.6" width="1.6" height="1" fill="#fffff0" opacity=".35"/><rect x="50.9" y="47.4" width="1.6" height="1" fill="#fffff0" opacity=".35"/><rect x="12.6" y="56.5" width="1.6" height="1" fill="#fffff0" opacity=".35"/><rect x="11.0" y="51.8" width="1.6" height="1" fill="#fffff0" opacity=".35"/><rect x="13.6" y="29.8" width="1.6" height="1" fill="#fffff0" opacity=".35"/><rect x="42.0" y="76.9" width="1.6" height="1" fill="#fffff0" opacity=".35"/><rect x="17.9" y="38.3" width="1.6" height="1" fill="#fffff0" opacity=".35"/><rect x="58.2" y="84.7" width="1.6" height="1" fill="#fffff0" opacity=".35"/><rect x="54.2" y="49.4" width="1.6" height="1" fill="#fffff0" opacity=".35"/><rect x="86.1" y="27.0" width="1.6" height="1" fill="#fffff0" opacity=".35"/><rect x="76.7" y="42.5" width="1.6" height="1" fill="#fffff0" opacity=".35"/><rect x="19.5" y="31.5" width="1.6" height="1" fill="#fffff0" opacity=".35"/><rect x="32.7" y="76.2" width="1.6" height="1" fill="#fffff0" opacity=".35"/><rect x="22.5" y="61.2" width="1.6" height="1" fill="#fffff0" opacity=".35"/><rect x="59.1" y="47.8" width="1.6" height="1" fill="#fffff0" opacity=".35"/><rect x="51.8" y="28.0" width="1.6" height="1" fill="#fffff0" opacity=".35"/><rect x="12.8" y="37.2" width="1.6" height="1" fill="#fffff0" opacity=".35"/><rect x="62.4" y="51.4" width="1.6" height="1" fill="#fffff0" opacity=".35"/><rect x="33.1" y="61.5" width="1.6" height="1" fill="#fffff0" opacity=".35"/><rect x="44.3" y="43.2" width="1.6" height="1" fill="#fffff0" opacity=".35"/><rect x="71.6" y="68.7" width="1.6" height="1" fill="#fffff0" opacity=".35"/><rect x="27.5" y="60.8" width="1.6" height="1" fill="#fffff0" opacity=".35"/><rect x="50.0" y="80.0" width="1.6" height="1" fill="#fffff0" opacity=".35"/><rect x="66.4" y="42.4" width="1.6" height="1" fill="#fffff0" opacity=".35"/><rect x="86.4" y="31.6" width="1.6" height="1" fill="#fffff0" opacity=".35"/><rect x="41.4" y="72.5" width="1.6" height="1" fill="#fffff0" opacity=".35"/><rect x="20.2" y="55.3" width="1.6" height="1" fill="#fffff0" opacity=".35"/><rect x="11.1" y="66.8" width="1.6" height="1" fill="#fffff0" opacity=".35"/><rect x="69.2" y="60.7" width="1.6" height="1" fill="#fffff0" opacity=".35"/><rect x="78.0" y="44.1" width="1.6" height="1" fill="#fffff0" opacity=".35"/><rect x="63.6" y="62.0" width="1.6" height="1" fill="#fffff0" opacity=".35"/><rect x="54.4" y="53.2" width="1.6" height="1" fill="#fffff0" opacity=".35"/><rect x="75.2" y="84.5" width="1.6" height="1" fill="#fffff0" opacity=".35"/><rect x="45.9" y="66.5" width="1.6" height="1" fill="#fffff0" opacity=".35"/><rect x="12.9" y="68.9" width="1.6" height="1" fill="#fffff0" opacity=".35"/><rect x="59.8" y="87.6" width="1.6" height="1" fill="#fffff0" opacity=".35"/><rect x="73.8" y="42.2" width="1.6" height="1" fill="#fffff0" opacity=".35"/><rect x="38.9" y="66.8" width="1.6" height="1" fill="#fffff0" opacity=".35"/><rect x="9.8" y="53.5" width="1.6" height="1" fill="#fffff0" opacity=".35"/><rect x="21.4" y="31.5" width="1.6" height="1" fill="#fffff0" opacity=".35"/><rect x="12.7" y="73.2" width="1.6" height="1" fill="#fffff0" opacity=".35"/><rect x="18.3" y="39.8" width="1.6" height="1" fill="#fffff0" opacity=".35"/><rect x="39.3" y="79.8" width="1.6" height="1" fill="#fffff0" opacity=".35"/><rect x="14.4" y="52.7" width="1.6" height="1" fill="#fffff0" opacity=".35"/><rect x="52.0" y="80.5" width="1.6" height="1" fill="#fffff0" opacity=".35"/><rect x="73.5" y="79.3" width="1.6" height="1" fill="#fffff0" opacity=".35"/><rect x="30.3" y="50.6" width="1.6" height="1" fill="#fffff0" opacity=".35"/><rect x="36.7" y="80.6" width="1.6" height="1" fill="#fffff0" opacity=".35"/><rect x="84.6" y="33.7" width="1.6" height="1" fill="#fffff0" opacity=".35"/><rect x="22.1" y="38.8" width="1.6" height="1" fill="#fffff0" opacity=".35"/><rect x="26.7" y="55.0" width="1.6" height="1" fill="#fffff0" opacity=".35"/><rect x="55.1" y="40.8" width="1.6" height="1" fill="#fffff0" opacity=".35"/><rect x="8.3" y="50.8" width="1.6" height="1" fill="#fffff0" opacity=".35"/><rect x="37.5" y="60.2" width="1.6" height="1" fill="#fffff0" opacity=".35"/><rect x="84.2" y="68.2" width="1.6" height="1" fill="#fffff0" opacity=".35"/><rect x="49.2" y="63.5" width="1.6" height="1" fill="#fffff0" opacity=".35"/><rect x="62.1" y="27.5" width="1.6" height="1" fill="#fffff0" opacity=".35"/><rect x="80.0" y="73.9" width="1.6" height="1" fill="#fffff0" opacity=".35"/><rect x="78.0" y="75.1" width="1.6" height="1" fill="#fffff0" opacity=".35"/><rect x="39.4" y="49.5" width="1.6" height="1" fill="#fffff0" opacity=".35"/><rect x="16.3" y="64.6" width="1.6" height="1" fill="#fffff0" opacity=".35"/><rect x="13.0" y="28.3" width="1.6" height="1" fill="#fffff0" opacity=".35"/><rect x="24.7" y="34.4" width="1.6" height="1" fill="#fffff0" opacity=".35"/><rect x="35.2" y="27.4" width="1.6" height="1" fill="#fffff0" opacity=".35"/><rect x="8.0" y="33.7" width="1.6" height="1" fill="#fffff0" opacity=".35"/><rect x="16.1" y="47.3" width="1.6" height="1" fill="#fffff0" opacity=".35"/><rect x="10.0" y="80.0" width="1.6" height="1" fill="#fffff0" opacity=".35"/><rect x="57.1" y="33.5" width="1.6" height="1" fill="#fffff0" opacity=".35"/><rect x="28.2" y="46.2" width="1.6" height="1" fill="#fffff0" opacity=".35"/>
<path d="M63,47 C72,45 76,53 73,61 C71,69 62,71 57,65" fill="none" stroke="#84826a" stroke-width="6" opacity=".5" filter="url(#bl)"/>
<path d="M40,80 C48,86 58,84 60,74" fill="none" stroke="#84826a" stroke-width="4" opacity=".3" filter="url(#bl)"/>
</g>
<g fill="none" stroke-linecap="round" filter="url(#b1)">
<path d="M27.6,30 C27,22 27.2,16 29,12 C32,4.2 44,4.2 46.4,13 C47.6,18 47.2,26 46.6,33" stroke="#7c80a6" stroke-width="4.4"/>
<path d="M27.2,30 C26.6,22 26.6,16 28.6,11.6 C31.6,3.8 43.6,3.8 46,12.6" stroke="#c9cbe0" stroke-width="1.5"/>
<path d="M44.6,38 C45,46 46.6,52 46.6,58 C46.6,66.5 36,67.5 34,58 C33,52 32,47 31.7,42" stroke="#72769e" stroke-width="4.2"/>
<path d="M44,38 C44.4,46 46,52 46,58 C46,65 36.8,66 34.8,58" stroke="#b4b6d2" stroke-width="1.4"/>
<path d="M26.8,33 C27.5,45 29,58 31,68 C34,82.5 52,83.5 53.6,70 C54.6,60 54,50 54,42" stroke="#7a7ea6" stroke-width="4.4"/>
<path d="M26.2,33 C26.9,45 28.4,58 30.4,68 C32,76 38,80 44,79.6" stroke="#c4c6de" stroke-width="1.5"/>
<path d="M53,70 C53.8,60 53.4,50 53.4,42" stroke="#b0b2cf" stroke-width="1.2"/>
</g>
<g filter="url(#b1)">
<ellipse cx="27.2" cy="27.4" rx="7.4" ry="5.8" fill="#b9bbd0" stroke="#5c6084" stroke-width="1"/>
<ellipse cx="26.4" cy="26.2" rx="4.8" ry="3.5" fill="#e2e3ee"/>
<ellipse cx="26.6" cy="26.8" rx="3.1" ry="2.7" fill="#08080e"/>
<ellipse cx="45" cy="33" rx="7.4" ry="5.8" fill="#b9bbd0" stroke="#5c6084" stroke-width="1"/>
<ellipse cx="44.2" cy="32" rx="4.8" ry="3.5" fill="#e2e3ee"/>
<ellipse cx="44" cy="32.6" rx="3.1" ry="2.7" fill="#08080e"/>
<path d="M24.5,18.6 C27,16.6 31,16.6 33.6,17.8" fill="none" stroke="#101018" stroke-width="2.3" stroke-linecap="round"/>
<path d="M46.2,22.6 C50,22.6 53.4,25.2 54.6,29" fill="none" stroke="#101018" stroke-width="2.3" stroke-linecap="round"/>
</g>
</svg>
</div>
</body></html>
